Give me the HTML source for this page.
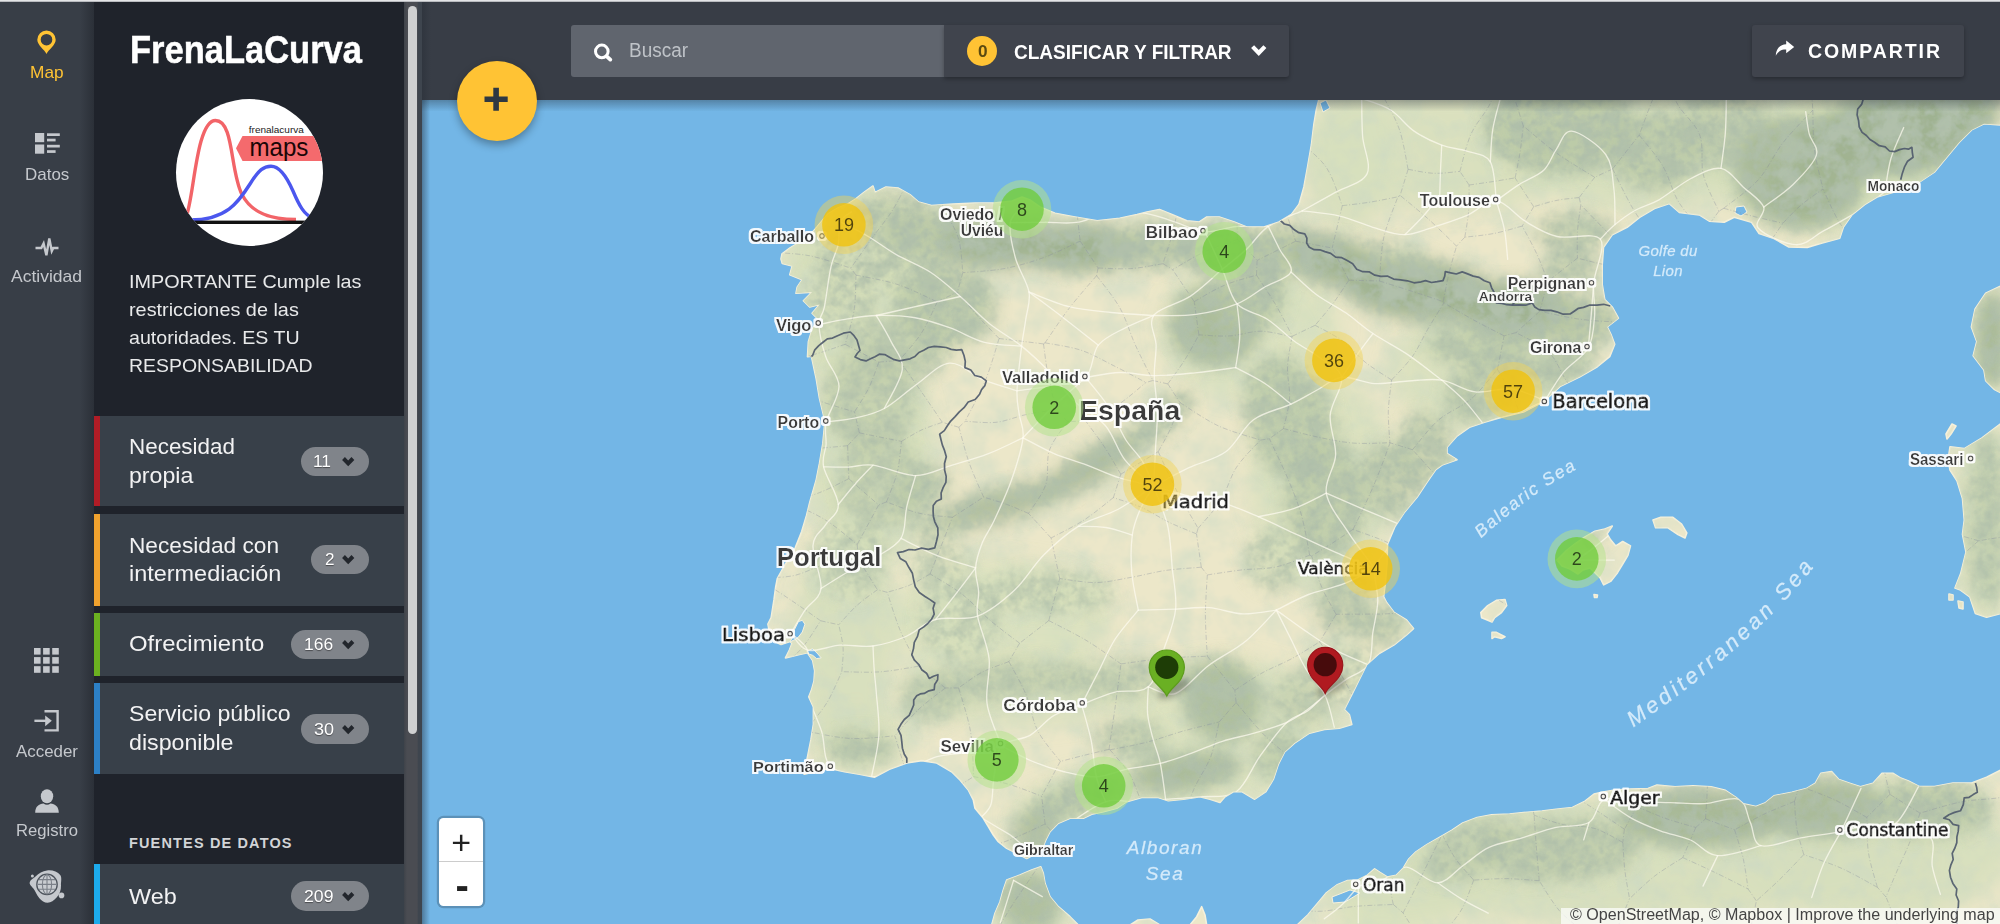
<!DOCTYPE html>
<html lang="es"><head><meta charset="utf-8"><title>FrenaLaCurva</title>
<style>

html,body{margin:0;padding:0;background:#1f232b;}
body{width:2000px;height:924px;overflow:hidden;font-family:'Liberation Sans', sans-serif;}
#app{position:relative;width:2000px;height:924px;overflow:hidden;background:#383d46;}
.t{position:absolute;white-space:nowrap;line-height:1;display:inline-block;transform-origin:0 50%;}
.abs{position:absolute;}
#rail{left:0;top:0;width:94px;height:924px;background:linear-gradient(90deg,#383e47 0,#383e47 80px,#2b3038 94px);}
#side{left:94px;top:0;width:310px;height:924px;background:#1f232b;}
.card{left:94px;width:310px;background:#384049;}
.card i{position:absolute;left:-0.4px;top:0;bottom:0;width:6.3px;}
.badge{height:29.6px;border-radius:15px;background:#80848a;}
#track{left:404px;top:0;width:17.5px;height:924px;background:linear-gradient(90deg,#3f434a 0,#4a4c52 3px,#4a4c52 13px,#3e454e 14.5px,#3e454e 100%);}
#thumb{left:408.3px;top:5.5px;width:9px;height:728.5px;border-radius:4.5px;background:#cfd0d1;}
#topbar{left:421px;top:0;width:1579px;height:99.8px;background:linear-gradient(90deg,#2f353e 0,#383d46 10px);}
#topline{left:0;top:0;width:2000px;height:2px;background:linear-gradient(180deg,#e4e5e7 0,#e4e5e7 1px,#8f9298 2px);z-index:9;}
#search{left:571px;top:25px;width:373px;height:52px;background:#60656e;border-radius:3px 0 0 3px;}
#filter{left:944px;top:25px;width:345.4px;height:52px;background:#40444d;border-radius:0 3px 3px 0;box-shadow:0 2px 4px rgba(0,0,0,.3);}
#share{left:1752.4px;top:25px;width:211.8px;height:52px;background:#40444d;border-radius:3px;box-shadow:0 2px 4px rgba(0,0,0,.3);}
#fab{left:456.6px;top:60.9px;width:80px;height:80px;border-radius:50%;background:#ffc334;box-shadow:0 4px 9px rgba(0,0,0,.32);}
#zoom{left:439.1px;top:818.1px;width:44.3px;height:87.9px;background:#fff;border-radius:4.5px;box-shadow:0 0 0 2.2px rgba(0,0,0,.2);}
#zoom b{position:absolute;left:0;right:0;top:43px;height:1.4px;background:#ccc;}
#attr{left:1561px;top:908.2px;width:439px;height:16px;background:rgba(255,255,255,.7);}
svg.ic{position:absolute;overflow:visible;}

</style></head><body>
<div id="app">
<svg id="map" width="1579" height="825" viewBox="421 99 1579 825" style="position:absolute;left:421px;top:99px" font-family="'Liberation Sans', sans-serif">
<defs>
<clipPath id="landclip"><path d="M1319.0,99.0 L1316.3,110.0 L1313.8,125.0 L1311.4,145.0 L1307.6,167.0 L1303.9,187.0 L1298.9,204.6 L1291.4,214.5 L1279.0,222.0 L1264.0,227.0 L1246.6,227.0 L1234.2,222.0 L1219.2,217.0 L1206.8,217.0 L1199.3,222.0 L1186.9,220.7 L1171.9,214.5 L1159.5,209.5 L1147.0,212.0 L1137.1,214.5 L1119.7,218.2 L1097.3,220.7 L1074.9,217.0 L1055.0,213.3 L1040.0,207.0 L1030.0,200.0 L1022.0,197.0 L1012.0,201.0 L994.0,203.0 L975.0,203.0 L953.0,204.0 L931.5,205.5 L918.5,202.0 L910.0,194.6 L898.0,188.0 L886.0,187.0 L875.0,192.5 L873.0,186.0 L864.0,192.5 L855.8,199.0 L848.0,204.0 L838.0,208.0 L828.0,214.0 L822.0,221.0 L817.0,227.0 L810.0,235.0 L800.0,242.0 L790.0,248.0 L782.0,254.0 L781.0,259.0 L782.3,263.5 L792.2,266.0 L789.8,274.7 L802.2,279.7 L797.2,287.1 L796.0,293.3 L812.1,292.1 L803.4,300.8 L809.7,307.0 L819.6,304.5 L812.1,313.2 L818.4,319.5 L812.1,329.4 L808.4,341.8 L807.5,356.8 L811.4,356.2 L816.3,379.0 L819.5,398.4 L825.0,421.2 L822.8,443.9 L819.5,463.4 L816.3,479.6 L809.8,502.3 L806.6,515.3 L801.7,531.6 L795.2,547.8 L785.5,564.0 L777.3,578.6 L775.7,586.8 L774.0,599.7 L771.2,617.7 L767.9,624.2 L769.5,632.0 L773.8,641.0 L781.0,644.5 L790.0,641.5 L792.0,643.5 L789.4,650.0 L785.5,657.9 L798.4,654.7 L807.5,652.7 L812.7,660.5 L814.7,670.9 L814.0,681.3 L811.4,690.4 L808.8,696.9 L813.4,707.0 L813.4,724.5 L811.0,739.4 L808.5,751.9 L806.0,764.3 L804.2,774.3 L814.7,771.8 L829.6,768.5 L844.6,771.8 L859.5,774.3 L874.4,777.2 L889.4,769.3 L906.8,763.0 L921.7,760.6 L936.7,763.0 L951.6,771.8 L960.0,780.0 L968.3,790.0 L973.3,800.0 L975.0,808.3 L983.3,818.3 L988.3,826.7 L993.3,835.0 L998.3,841.7 L1006.7,848.3 L1016.7,853.3 L1026.7,858.5 L1033.3,855.0 L1041.7,850.0 L1045.8,840.0 L1050.0,831.7 L1058.3,823.3 L1070.0,818.3 L1083.3,818.3 L1091.7,814.2 L1103.3,811.7 L1116.7,808.3 L1126.7,801.7 L1141.7,797.5 L1158.3,797.5 L1168.3,800.8 L1183.3,799.2 L1200.0,796.7 L1210.0,799.2 L1220.0,802.5 L1225.0,796.7 L1233.3,791.7 L1242.2,791.7 L1254.7,799.2 L1265.9,791.7 L1273.4,779.2 L1278.3,764.3 L1284.6,751.9 L1294.5,743.1 L1309.4,733.2 L1324.4,729.4 L1339.3,728.2 L1351.8,724.5 L1349.3,714.5 L1344.3,709.5 L1351.8,694.6 L1359.2,679.7 L1366.7,664.7 L1379.2,653.5 L1394.1,644.8 L1406.5,634.9 L1413.5,628.6 L1406.5,619.9 L1394.1,612.4 L1386.6,602.5 L1383.6,596.6 L1385.5,582.0 L1387.0,563.0 L1387.5,544.3 L1394.8,526.9 L1404.7,511.9 L1417.2,497.0 L1427.1,482.1 L1435.8,469.6 L1442.0,465.0 L1457.0,459.7 L1447.0,453.4 L1447.0,447.2 L1457.0,436.0 L1469.4,427.3 L1484.4,422.3 L1501.8,417.3 L1524.2,411.6 L1544.1,401.2 L1559.9,386.6 L1579.8,376.7 L1597.3,366.7 L1609.7,356.7 L1614.7,344.3 L1610.9,334.3 L1607.2,326.9 L1618.4,318.2 L1612.2,307.0 L1604.7,299.5 L1602.2,284.6 L1602.2,264.6 L1603.5,247.2 L1612.2,234.8 L1627.1,227.3 L1639.6,217.3 L1654.5,208.6 L1669.4,203.6 L1679.4,212.4 L1699.3,214.9 L1709.3,221.1 L1724.2,222.3 L1734.2,217.3 L1751.6,222.3 L1759.1,233.5 L1774.0,238.5 L1788.9,247.0 L1807.3,247.5 L1822.2,243.1 L1839.7,238.2 L1843.4,227.0 L1852.1,214.5 L1864.6,204.6 L1877.0,197.1 L1894.4,192.1 L1919.3,182.2 L1934.3,172.2 L1946.7,157.3 L1959.2,142.3 L1971.6,129.9 L1984.0,123.7 L2001.0,124.9 L2001.0,99.0Z M991.7,925.0 L995.0,913.3 L1000.0,901.7 L1003.3,890.0 L1006.7,880.0 L1020.0,875.0 L1031.7,870.0 L1040.8,866.7 L1043.3,873.3 L1045.0,883.3 L1050.0,896.7 L1058.3,906.7 L1070.0,916.7 L1078.3,925.0Z M1130.0,925.0 L1138.0,920.0 L1150.0,919.0 L1160.0,925.0Z M1190.0,925.0 L1196.7,916.7 L1201.7,906.7 L1205.0,915.0 L1206.7,925.0Z M1297.2,925.0 L1308.0,914.8 L1317.0,904.0 L1326.0,893.2 L1336.8,885.1 L1347.6,880.6 L1358.0,880.0 L1367.4,875.2 L1374.6,868.9 L1380.0,872.5 L1387.2,877.0 L1396.2,875.2 L1403.4,868.0 L1408.8,859.0 L1416.0,851.8 L1426.8,844.6 L1439.4,837.4 L1452.0,830.2 L1462.8,823.0 L1477.2,817.6 L1491.6,814.9 L1509.6,814.0 L1527.6,812.2 L1542.0,811.0 L1556.2,809.3 L1572.4,807.5 L1585.0,801.2 L1594.0,794.0 L1603.0,792.0 L1615.0,790.0 L1630.0,789.0 L1648.0,788.6 L1657.0,785.0 L1675.0,786.8 L1693.0,785.9 L1711.0,786.8 L1725.4,790.4 L1736.2,797.6 L1743.4,803.9 L1756.0,806.6 L1765.0,803.0 L1774.0,795.8 L1792.0,792.2 L1806.4,788.6 L1815.4,783.2 L1820.8,773.3 L1831.6,771.5 L1838.8,779.6 L1849.6,783.2 L1860.4,786.8 L1873.0,783.2 L1882.0,773.3 L1892.8,773.3 L1900.0,777.8 L1908.4,781.0 L1919.6,786.6 L1934.5,786.6 L1953.0,783.0 L1971.7,783.0 L1986.6,777.3 L2001.0,770.0 L2001.0,925.0Z M2001.0,423.6 L1982.0,437.9 L1964.3,448.6 L1950.0,446.8 L1948.2,459.3 L1950.0,470.0 L1957.0,480.7 L1962.5,498.6 L1964.3,520.0 L1962.5,534.3 L1966.0,552.1 L1960.7,573.6 L1955.0,588.0 L1960.5,590.0 L1969.8,596.8 L1975.4,613.5 L1986.6,617.2 L2001.0,613.5Z M1952.0,424.0 L1956.0,426.0 L1951.0,434.0 L1947.0,439.0 L1946.0,434.0Z M1949.0,594.0 L1953.0,595.0 L1953.0,600.0 L1949.0,600.0Z M1958.0,601.0 L1963.0,602.0 L1963.0,609.0 L1959.0,608.0Z M2001.0,286.0 L1985.7,293.2 L1975.0,309.3 L1971.4,327.0 L1976.8,341.4 L1973.2,355.7 L1984.0,370.0 L1985.7,380.7 L1994.6,389.6 L2001.0,393.0Z M1557.0,560.0 L1566.0,551.0 L1575.0,544.0 L1584.6,537.2 L1595.0,531.2 L1603.7,529.4 L1612.3,526.0 L1607.1,533.8 L1610.6,539.8 L1615.8,545.9 L1622.7,541.5 L1630.5,545.9 L1627.9,555.4 L1622.7,564.0 L1617.5,572.7 L1610.6,581.4 L1603.7,584.8 L1600.2,577.9 L1596.7,574.4 L1590.0,568.0 L1583.0,570.0 L1578.0,574.0 L1570.0,569.0 L1562.0,566.0Z M1653.0,519.9 L1660.8,517.3 L1672.9,517.3 L1681.6,524.2 L1686.8,532.9 L1685.0,538.0 L1678.0,534.6 L1667.7,527.7 L1655.6,527.7Z M1480.8,612.5 L1487.7,605.6 L1496.4,600.4 L1505.0,599.5 L1506.7,605.6 L1501.5,612.5 L1494.6,617.7 L1492.0,622.0 L1486.0,619.4 L1481.6,617.7Z M1492.0,632.4 L1496.4,632.4 L1505.0,636.7 L1501.5,638.5 L1494.6,636.7 L1492.0,638.5Z M1594.0,594.5 L1597.5,595.0 L1597.0,597.5 L1594.5,597.5Z"/></clipPath>
<filter id="bl" filterUnits="userSpaceOnUse" x="421" y="99" width="1579" height="825"><feGaussianBlur in="SourceGraphic" stdDeviation="8" result="b"/><feTurbulence type="fractalNoise" baseFrequency="0.05" numOctaves="4" seed="11" result="n"/><feColorMatrix in="n" type="matrix" values="0 0 0 0 0.44  0 0 0 0 0.53  0 0 0 0 0.41  3.4 0 0 0 -1.25" result="nc"/><feComposite in="nc" in2="b" operator="in" result="nm"/><feTurbulence type="fractalNoise" baseFrequency="0.13" numOctaves="2" seed="23" result="n2"/><feColorMatrix in="n2" type="matrix" values="0 0 0 0 0.42  0 0 0 0 0.51  0 0 0 0 0.40  0 2.6 0 0 -1.12" result="nc2"/><feComposite in="nc2" in2="b" operator="in" result="nm2"/><feMerge><feMergeNode in="b"/><feMergeNode in="nm"/><feMergeNode in="nm2"/></feMerge></filter>
<filter id="wb" filterUnits="userSpaceOnUse" x="421" y="99" width="1579" height="825"><feGaussianBlur in="SourceGraphic" stdDeviation="10" result="b"/><feTurbulence type="fractalNoise" baseFrequency="0.04" numOctaves="3" seed="31" result="n"/><feColorMatrix in="n" type="matrix" values="0 0 0 0 0.62  0 0 0 0 0.70  0 0 0 0 0.54  2.2 0 0 0 -0.9" result="nc"/><feComposite in="nc" in2="b" operator="in" result="nm"/><feMerge><feMergeNode in="b"/><feMergeNode in="nm"/></feMerge></filter>
<filter id="tx" filterUnits="userSpaceOnUse" x="421" y="99" width="1579" height="825"><feTurbulence type="fractalNoise" baseFrequency="0.03" numOctaves="4" seed="4" result="n"/><feColorMatrix in="n" type="matrix" values="0 0 0 0 0.66  0 0 0 0 0.73  0 0 0 0 0.57  0 1.9 0 0 -0.74" result="nc"/><feComposite in="nc" in2="SourceGraphic" operator="in"/></filter>
<filter id="sh" x="-50%" y="-50%" width="200%" height="200%"><feGaussianBlur stdDeviation="3"/></filter>
<filter id="halo" x="-10%" y="-30%" width="120%" height="160%"><feMorphology in="SourceAlpha" operator="dilate" radius="1.6" result="d"/><feGaussianBlur in="d" stdDeviation="0.7" result="b"/><feFlood flood-color="#fff" flood-opacity="0.92"/><feComposite in2="b" operator="in" result="h"/><feMerge><feMergeNode in="h"/><feMergeNode in="SourceGraphic"/></feMerge></filter>
<linearGradient id="edge" x1="0" x2="1"><stop offset="0" stop-color="#2a3a4a" stop-opacity="0.55"/><stop offset="1" stop-color="#2a3a4a" stop-opacity="0"/></linearGradient>
<linearGradient id="topsh" x1="0" x2="0" y1="0" y2="1"><stop offset="0" stop-color="#1c2630" stop-opacity="0.36"/><stop offset="1" stop-color="#1c2630" stop-opacity="0"/></linearGradient>
</defs>
<rect x="421" y="99" width="1579" height="825" fill="#73b6e6"/>
<path d="M1319.0,99.0 L1316.3,110.0 L1313.8,125.0 L1311.4,145.0 L1307.6,167.0 L1303.9,187.0 L1298.9,204.6 L1291.4,214.5 L1279.0,222.0 L1264.0,227.0 L1246.6,227.0 L1234.2,222.0 L1219.2,217.0 L1206.8,217.0 L1199.3,222.0 L1186.9,220.7 L1171.9,214.5 L1159.5,209.5 L1147.0,212.0 L1137.1,214.5 L1119.7,218.2 L1097.3,220.7 L1074.9,217.0 L1055.0,213.3 L1040.0,207.0 L1030.0,200.0 L1022.0,197.0 L1012.0,201.0 L994.0,203.0 L975.0,203.0 L953.0,204.0 L931.5,205.5 L918.5,202.0 L910.0,194.6 L898.0,188.0 L886.0,187.0 L875.0,192.5 L873.0,186.0 L864.0,192.5 L855.8,199.0 L848.0,204.0 L838.0,208.0 L828.0,214.0 L822.0,221.0 L817.0,227.0 L810.0,235.0 L800.0,242.0 L790.0,248.0 L782.0,254.0 L781.0,259.0 L782.3,263.5 L792.2,266.0 L789.8,274.7 L802.2,279.7 L797.2,287.1 L796.0,293.3 L812.1,292.1 L803.4,300.8 L809.7,307.0 L819.6,304.5 L812.1,313.2 L818.4,319.5 L812.1,329.4 L808.4,341.8 L807.5,356.8 L811.4,356.2 L816.3,379.0 L819.5,398.4 L825.0,421.2 L822.8,443.9 L819.5,463.4 L816.3,479.6 L809.8,502.3 L806.6,515.3 L801.7,531.6 L795.2,547.8 L785.5,564.0 L777.3,578.6 L775.7,586.8 L774.0,599.7 L771.2,617.7 L767.9,624.2 L769.5,632.0 L773.8,641.0 L781.0,644.5 L790.0,641.5 L792.0,643.5 L789.4,650.0 L785.5,657.9 L798.4,654.7 L807.5,652.7 L812.7,660.5 L814.7,670.9 L814.0,681.3 L811.4,690.4 L808.8,696.9 L813.4,707.0 L813.4,724.5 L811.0,739.4 L808.5,751.9 L806.0,764.3 L804.2,774.3 L814.7,771.8 L829.6,768.5 L844.6,771.8 L859.5,774.3 L874.4,777.2 L889.4,769.3 L906.8,763.0 L921.7,760.6 L936.7,763.0 L951.6,771.8 L960.0,780.0 L968.3,790.0 L973.3,800.0 L975.0,808.3 L983.3,818.3 L988.3,826.7 L993.3,835.0 L998.3,841.7 L1006.7,848.3 L1016.7,853.3 L1026.7,858.5 L1033.3,855.0 L1041.7,850.0 L1045.8,840.0 L1050.0,831.7 L1058.3,823.3 L1070.0,818.3 L1083.3,818.3 L1091.7,814.2 L1103.3,811.7 L1116.7,808.3 L1126.7,801.7 L1141.7,797.5 L1158.3,797.5 L1168.3,800.8 L1183.3,799.2 L1200.0,796.7 L1210.0,799.2 L1220.0,802.5 L1225.0,796.7 L1233.3,791.7 L1242.2,791.7 L1254.7,799.2 L1265.9,791.7 L1273.4,779.2 L1278.3,764.3 L1284.6,751.9 L1294.5,743.1 L1309.4,733.2 L1324.4,729.4 L1339.3,728.2 L1351.8,724.5 L1349.3,714.5 L1344.3,709.5 L1351.8,694.6 L1359.2,679.7 L1366.7,664.7 L1379.2,653.5 L1394.1,644.8 L1406.5,634.9 L1413.5,628.6 L1406.5,619.9 L1394.1,612.4 L1386.6,602.5 L1383.6,596.6 L1385.5,582.0 L1387.0,563.0 L1387.5,544.3 L1394.8,526.9 L1404.7,511.9 L1417.2,497.0 L1427.1,482.1 L1435.8,469.6 L1442.0,465.0 L1457.0,459.7 L1447.0,453.4 L1447.0,447.2 L1457.0,436.0 L1469.4,427.3 L1484.4,422.3 L1501.8,417.3 L1524.2,411.6 L1544.1,401.2 L1559.9,386.6 L1579.8,376.7 L1597.3,366.7 L1609.7,356.7 L1614.7,344.3 L1610.9,334.3 L1607.2,326.9 L1618.4,318.2 L1612.2,307.0 L1604.7,299.5 L1602.2,284.6 L1602.2,264.6 L1603.5,247.2 L1612.2,234.8 L1627.1,227.3 L1639.6,217.3 L1654.5,208.6 L1669.4,203.6 L1679.4,212.4 L1699.3,214.9 L1709.3,221.1 L1724.2,222.3 L1734.2,217.3 L1751.6,222.3 L1759.1,233.5 L1774.0,238.5 L1788.9,247.0 L1807.3,247.5 L1822.2,243.1 L1839.7,238.2 L1843.4,227.0 L1852.1,214.5 L1864.6,204.6 L1877.0,197.1 L1894.4,192.1 L1919.3,182.2 L1934.3,172.2 L1946.7,157.3 L1959.2,142.3 L1971.6,129.9 L1984.0,123.7 L2001.0,124.9 L2001.0,99.0Z M991.7,925.0 L995.0,913.3 L1000.0,901.7 L1003.3,890.0 L1006.7,880.0 L1020.0,875.0 L1031.7,870.0 L1040.8,866.7 L1043.3,873.3 L1045.0,883.3 L1050.0,896.7 L1058.3,906.7 L1070.0,916.7 L1078.3,925.0Z M1130.0,925.0 L1138.0,920.0 L1150.0,919.0 L1160.0,925.0Z M1190.0,925.0 L1196.7,916.7 L1201.7,906.7 L1205.0,915.0 L1206.7,925.0Z M1297.2,925.0 L1308.0,914.8 L1317.0,904.0 L1326.0,893.2 L1336.8,885.1 L1347.6,880.6 L1358.0,880.0 L1367.4,875.2 L1374.6,868.9 L1380.0,872.5 L1387.2,877.0 L1396.2,875.2 L1403.4,868.0 L1408.8,859.0 L1416.0,851.8 L1426.8,844.6 L1439.4,837.4 L1452.0,830.2 L1462.8,823.0 L1477.2,817.6 L1491.6,814.9 L1509.6,814.0 L1527.6,812.2 L1542.0,811.0 L1556.2,809.3 L1572.4,807.5 L1585.0,801.2 L1594.0,794.0 L1603.0,792.0 L1615.0,790.0 L1630.0,789.0 L1648.0,788.6 L1657.0,785.0 L1675.0,786.8 L1693.0,785.9 L1711.0,786.8 L1725.4,790.4 L1736.2,797.6 L1743.4,803.9 L1756.0,806.6 L1765.0,803.0 L1774.0,795.8 L1792.0,792.2 L1806.4,788.6 L1815.4,783.2 L1820.8,773.3 L1831.6,771.5 L1838.8,779.6 L1849.6,783.2 L1860.4,786.8 L1873.0,783.2 L1882.0,773.3 L1892.8,773.3 L1900.0,777.8 L1908.4,781.0 L1919.6,786.6 L1934.5,786.6 L1953.0,783.0 L1971.7,783.0 L1986.6,777.3 L2001.0,770.0 L2001.0,925.0Z M2001.0,423.6 L1982.0,437.9 L1964.3,448.6 L1950.0,446.8 L1948.2,459.3 L1950.0,470.0 L1957.0,480.7 L1962.5,498.6 L1964.3,520.0 L1962.5,534.3 L1966.0,552.1 L1960.7,573.6 L1955.0,588.0 L1960.5,590.0 L1969.8,596.8 L1975.4,613.5 L1986.6,617.2 L2001.0,613.5Z M1952.0,424.0 L1956.0,426.0 L1951.0,434.0 L1947.0,439.0 L1946.0,434.0Z M1949.0,594.0 L1953.0,595.0 L1953.0,600.0 L1949.0,600.0Z M1958.0,601.0 L1963.0,602.0 L1963.0,609.0 L1959.0,608.0Z M2001.0,286.0 L1985.7,293.2 L1975.0,309.3 L1971.4,327.0 L1976.8,341.4 L1973.2,355.7 L1984.0,370.0 L1985.7,380.7 L1994.6,389.6 L2001.0,393.0Z M1557.0,560.0 L1566.0,551.0 L1575.0,544.0 L1584.6,537.2 L1595.0,531.2 L1603.7,529.4 L1612.3,526.0 L1607.1,533.8 L1610.6,539.8 L1615.8,545.9 L1622.7,541.5 L1630.5,545.9 L1627.9,555.4 L1622.7,564.0 L1617.5,572.7 L1610.6,581.4 L1603.7,584.8 L1600.2,577.9 L1596.7,574.4 L1590.0,568.0 L1583.0,570.0 L1578.0,574.0 L1570.0,569.0 L1562.0,566.0Z M1653.0,519.9 L1660.8,517.3 L1672.9,517.3 L1681.6,524.2 L1686.8,532.9 L1685.0,538.0 L1678.0,534.6 L1667.7,527.7 L1655.6,527.7Z M1480.8,612.5 L1487.7,605.6 L1496.4,600.4 L1505.0,599.5 L1506.7,605.6 L1501.5,612.5 L1494.6,617.7 L1492.0,622.0 L1486.0,619.4 L1481.6,617.7Z M1492.0,632.4 L1496.4,632.4 L1505.0,636.7 L1501.5,638.5 L1494.6,636.7 L1492.0,638.5Z M1594.0,594.5 L1597.5,595.0 L1597.0,597.5 L1594.5,597.5Z" fill="#ece7c9" stroke="#f6f1dc" stroke-width="1.6" stroke-linejoin="round"/>
<g clip-path="url(#landclip)">
<rect x="421" y="99" width="1579" height="825" fill="#000" filter="url(#tx)"/>
<g filter="url(#wb)"><ellipse cx="865" cy="290" rx="85" ry="100" transform="rotate(0 865 290)" fill="#d6dfbc" opacity="0.95"/><ellipse cx="870" cy="450" rx="60" ry="110" transform="rotate(0 870 450)" fill="#d6dfbc" opacity="0.95"/><ellipse cx="845" cy="640" rx="50" ry="110" transform="rotate(0 845 640)" fill="#d6dfbc" opacity="0.9"/><ellipse cx="860" cy="740" rx="50" ry="30" transform="rotate(0 860 740)" fill="#d6dfbc" opacity="0.8"/><ellipse cx="1000" cy="620" rx="110" ry="60" transform="rotate(0 1000 620)" fill="#d6dfbc" opacity="0.7"/><ellipse cx="1020" cy="690" rx="120" ry="35" transform="rotate(0 1020 690)" fill="#d6dfbc" opacity="0.8"/><ellipse cx="1450" cy="150" rx="140" ry="60" transform="rotate(0 1450 150)" fill="#d6dfbc" opacity="0.8"/><ellipse cx="1640" cy="150" rx="120" ry="60" transform="rotate(0 1640 150)" fill="#d6dfbc" opacity="0.9"/><ellipse cx="1850" cy="160" rx="150" ry="70" transform="rotate(0 1850 160)" fill="#d6dfbc" opacity="0.95"/><ellipse cx="1350" cy="160" rx="45" ry="70" transform="rotate(0 1350 160)" fill="#d6dfbc" opacity="0.9"/><ellipse cx="1600" cy="860" rx="330" ry="60" transform="rotate(0 1600 860)" fill="#d6dfbc" opacity="0.9"/><ellipse cx="1880" cy="850" rx="130" ry="70" transform="rotate(0 1880 850)" fill="#d6dfbc" opacity="0.9"/><ellipse cx="1420" cy="890" rx="90" ry="40" transform="rotate(-20 1420 890)" fill="#d6dfbc" opacity="0.85"/><ellipse cx="1030" cy="900" rx="40" ry="35" transform="rotate(0 1030 900)" fill="#d6dfbc" opacity="0.9"/><ellipse cx="1985" cy="520" rx="30" ry="100" transform="rotate(0 1985 520)" fill="#d6dfbc" opacity="0.9"/><ellipse cx="1990" cy="340" rx="20" ry="55" transform="rotate(0 1990 340)" fill="#d6dfbc" opacity="0.9"/><ellipse cx="1250" cy="330" rx="90" ry="70" transform="rotate(0 1250 330)" fill="#d6dfbc" opacity="0.7"/><ellipse cx="1320" cy="480" rx="70" ry="110" transform="rotate(0 1320 480)" fill="#d6dfbc" opacity="0.75"/><ellipse cx="1480" cy="370" rx="90" ry="60" transform="rotate(0 1480 370)" fill="#d6dfbc" opacity="0.75"/><ellipse cx="1230" cy="730" rx="110" ry="70" transform="rotate(0 1230 730)" fill="#d6dfbc" opacity="0.7"/><ellipse cx="1110" cy="800" rx="100" ry="30" transform="rotate(-8 1110 800)" fill="#d6dfbc" opacity="0.7"/></g>
<g filter="url(#bl)"><ellipse cx="870" cy="250" rx="55" ry="45" transform="rotate(0 870 250)" fill="#d0dab6" opacity="0.6"/><ellipse cx="840" cy="300" rx="35" ry="45" transform="rotate(0 840 300)" fill="#d0dab6" opacity="0.5"/><ellipse cx="900" cy="215" rx="40" ry="20" transform="rotate(0 900 215)" fill="#b9c8a5" opacity="0.6"/><ellipse cx="930" cy="237" rx="50" ry="24" transform="rotate(0 930 237)" fill="#b9c8a5" opacity="0.9"/><ellipse cx="1000" cy="243" rx="60" ry="24" transform="rotate(0 1000 243)" fill="#a0b391" opacity="0.95"/><ellipse cx="1080" cy="248" rx="60" ry="23" transform="rotate(0 1080 248)" fill="#a0b391" opacity="0.95"/><ellipse cx="1150" cy="246" rx="50" ry="21" transform="rotate(0 1150 246)" fill="#b9c8a5" opacity="0.9"/><ellipse cx="1225" cy="250" rx="50" ry="24" transform="rotate(0 1225 250)" fill="#b9c8a5" opacity="0.85"/><ellipse cx="1285" cy="245" rx="28" ry="22" transform="rotate(0 1285 245)" fill="#b9c8a5" opacity="0.7"/><ellipse cx="945" cy="305" rx="50" ry="42" transform="rotate(0 945 305)" fill="#b9c8a5" opacity="0.8"/><ellipse cx="900" cy="350" rx="50" ry="30" transform="rotate(0 900 350)" fill="#b9c8a5" opacity="0.55"/><ellipse cx="870" cy="400" rx="45" ry="50" transform="rotate(0 870 400)" fill="#b9c8a5" opacity="0.55"/><ellipse cx="880" cy="480" rx="42" ry="48" transform="rotate(0 880 480)" fill="#b9c8a5" opacity="0.5"/><ellipse cx="850" cy="560" rx="38" ry="38" transform="rotate(0 850 560)" fill="#d0dab6" opacity="0.55"/><ellipse cx="920" cy="490" rx="30" ry="20" transform="rotate(-30 920 490)" fill="#b9c8a5" opacity="0.7"/><ellipse cx="1000" cy="505" rx="62" ry="16" transform="rotate(-15 1000 505)" fill="#a0b391" opacity="0.75"/><ellipse cx="1092" cy="466" rx="60" ry="16" transform="rotate(-30 1092 466)" fill="#a0b391" opacity="0.8"/><ellipse cx="1160" cy="420" rx="40" ry="15" transform="rotate(-40 1160 420)" fill="#b9c8a5" opacity="0.7"/><ellipse cx="940" cy="525" rx="30" ry="15" transform="rotate(-10 940 525)" fill="#b9c8a5" opacity="0.6"/><ellipse cx="1215" cy="325" rx="45" ry="40" transform="rotate(0 1215 325)" fill="#a0b391" opacity="0.8"/><ellipse cx="1250" cy="295" rx="35" ry="35" transform="rotate(0 1250 295)" fill="#b9c8a5" opacity="0.8"/><ellipse cx="1290" cy="420" rx="42" ry="65" transform="rotate(-20 1290 420)" fill="#b9c8a5" opacity="0.75"/><ellipse cx="1325" cy="500" rx="40" ry="60" transform="rotate(0 1325 500)" fill="#b9c8a5" opacity="0.75"/><ellipse cx="1275" cy="560" rx="30" ry="30" transform="rotate(0 1275 560)" fill="#d0dab6" opacity="0.6"/><ellipse cx="1390" cy="480" rx="30" ry="38" transform="rotate(0 1390 480)" fill="#b9c8a5" opacity="0.7"/><ellipse cx="1345" cy="600" rx="28" ry="35" transform="rotate(0 1345 600)" fill="#b9c8a5" opacity="0.7"/><ellipse cx="1335" cy="262" rx="50" ry="24" transform="rotate(15 1335 262)" fill="#a0b391" opacity="0.9"/><ellipse cx="1420" cy="290" rx="75" ry="30" transform="rotate(5 1420 290)" fill="#a0b391" opacity="0.95"/><ellipse cx="1520" cy="310" rx="62" ry="28" transform="rotate(5 1520 310)" fill="#a0b391" opacity="0.95"/><ellipse cx="1580" cy="320" rx="40" ry="24" transform="rotate(0 1580 320)" fill="#b9c8a5" opacity="0.85"/><ellipse cx="1260" cy="258" rx="38" ry="28" transform="rotate(0 1260 258)" fill="#b9c8a5" opacity="0.8"/><ellipse cx="1390" cy="262" rx="50" ry="18" transform="rotate(10 1390 262)" fill="#b9c8a5" opacity="0.6"/><ellipse cx="1480" cy="345" rx="55" ry="20" transform="rotate(0 1480 345)" fill="#b9c8a5" opacity="0.65"/><ellipse cx="1400" cy="286" rx="60" ry="16" transform="rotate(8 1400 286)" fill="#a0b391" opacity="0.9"/><ellipse cx="1500" cy="306" rx="60" ry="16" transform="rotate(4 1500 306)" fill="#a0b391" opacity="0.9"/><ellipse cx="1340" cy="258" rx="35" ry="12" transform="rotate(15 1340 258)" fill="#a0b391" opacity="0.8"/><ellipse cx="1880" cy="140" rx="80" ry="35" transform="rotate(0 1880 140)" fill="#a0b391" opacity="0.9"/><ellipse cx="1810" cy="190" rx="45" ry="35" transform="rotate(0 1810 190)" fill="#a0b391" opacity="0.7"/><ellipse cx="1950" cy="118" rx="45" ry="18" transform="rotate(0 1950 118)" fill="#a0b391" opacity="0.9"/><ellipse cx="1040" cy="244" rx="90" ry="12" transform="rotate(2 1040 244)" fill="#a0b391" opacity="0.8"/><ellipse cx="1490" cy="385" rx="48" ry="30" transform="rotate(-30 1490 385)" fill="#b9c8a5" opacity="0.7"/><ellipse cx="1425" cy="450" rx="28" ry="38" transform="rotate(0 1425 450)" fill="#b9c8a5" opacity="0.65"/><ellipse cx="1562" cy="362" rx="38" ry="22" transform="rotate(-30 1562 362)" fill="#b9c8a5" opacity="0.65"/><ellipse cx="1045" cy="592" rx="70" ry="20" transform="rotate(0 1045 592)" fill="#d0dab6" opacity="0.6"/><ellipse cx="960" cy="620" rx="40" ry="40" transform="rotate(0 960 620)" fill="#d0dab6" opacity="0.55"/><ellipse cx="940" cy="565" rx="30" ry="25" transform="rotate(0 940 565)" fill="#d0dab6" opacity="0.5"/><ellipse cx="1000" cy="682" rx="85" ry="18" transform="rotate(-5 1000 682)" fill="#b9c8a5" opacity="0.55"/><ellipse cx="1130" cy="678" rx="70" ry="18" transform="rotate(-5 1130 678)" fill="#b9c8a5" opacity="0.55"/><ellipse cx="930" cy="700" rx="30" ry="25" transform="rotate(0 930 700)" fill="#b9c8a5" opacity="0.45"/><ellipse cx="1222" cy="700" rx="38" ry="42" transform="rotate(-25 1222 700)" fill="#a0b391" opacity="0.72"/><ellipse cx="1185" cy="772" rx="55" ry="18" transform="rotate(-8 1185 772)" fill="#a0b391" opacity="0.8"/><ellipse cx="1075" cy="800" rx="45" ry="18" transform="rotate(-15 1075 800)" fill="#b9c8a5" opacity="0.8"/><ellipse cx="1035" cy="832" rx="22" ry="22" transform="rotate(0 1035 832)" fill="#a0b391" opacity="0.7"/><ellipse cx="1280" cy="755" rx="25" ry="28" transform="rotate(0 1280 755)" fill="#b9c8a5" opacity="0.65"/><ellipse cx="1130" cy="740" rx="35" ry="20" transform="rotate(0 1130 740)" fill="#b9c8a5" opacity="0.55"/><ellipse cx="1340" cy="672" rx="38" ry="30" transform="rotate(0 1340 672)" fill="#d0dab6" opacity="0.6"/><ellipse cx="1382" cy="625" rx="25" ry="20" transform="rotate(0 1382 625)" fill="#b9c8a5" opacity="0.65"/><ellipse cx="1300" cy="700" rx="30" ry="25" transform="rotate(0 1300 700)" fill="#b9c8a5" opacity="0.5"/><ellipse cx="860" cy="748" rx="32" ry="16" transform="rotate(0 860 748)" fill="#b9c8a5" opacity="0.65"/><ellipse cx="1560" cy="128" rx="75" ry="45" transform="rotate(0 1560 128)" fill="#b9c8a5" opacity="0.85"/><ellipse cx="1655" cy="150" rx="48" ry="38" transform="rotate(0 1655 150)" fill="#b9c8a5" opacity="0.8"/><ellipse cx="1725" cy="128" rx="48" ry="38" transform="rotate(0 1725 128)" fill="#b9c8a5" opacity="0.7"/><ellipse cx="1800" cy="172" rx="65" ry="55" transform="rotate(0 1800 172)" fill="#a0b391" opacity="0.8"/><ellipse cx="1900" cy="132" rx="70" ry="40" transform="rotate(0 1900 132)" fill="#a0b391" opacity="0.9"/><ellipse cx="1960" cy="110" rx="40" ry="20" transform="rotate(0 1960 110)" fill="#a0b391" opacity="0.9"/><ellipse cx="1575" cy="232" rx="38" ry="18" transform="rotate(0 1575 232)" fill="#b9c8a5" opacity="0.7"/><ellipse cx="1570" cy="268" rx="28" ry="18" transform="rotate(0 1570 268)" fill="#b9c8a5" opacity="0.7"/><ellipse cx="1030" cy="902" rx="30" ry="30" transform="rotate(0 1030 902)" fill="#a0b391" opacity="0.7"/><ellipse cx="1560" cy="850" rx="80" ry="30" transform="rotate(-5 1560 850)" fill="#b9c8a5" opacity="0.7"/><ellipse cx="1700" cy="818" rx="80" ry="28" transform="rotate(0 1700 818)" fill="#a0b391" opacity="0.85"/><ellipse cx="1820" cy="808" rx="70" ry="28" transform="rotate(0 1820 808)" fill="#a0b391" opacity="0.8"/><ellipse cx="1930" cy="808" rx="60" ry="28" transform="rotate(0 1930 808)" fill="#b9c8a5" opacity="0.8"/><ellipse cx="1470" cy="850" rx="50" ry="25" transform="rotate(-25 1470 850)" fill="#b9c8a5" opacity="0.6"/><ellipse cx="1988" cy="520" rx="20" ry="85" transform="rotate(0 1988 520)" fill="#b9c8a5" opacity="0.6"/><ellipse cx="1992" cy="340" rx="15" ry="48" transform="rotate(0 1992 340)" fill="#a0b391" opacity="0.85"/><ellipse cx="1590" cy="540" rx="22" ry="6" transform="rotate(-35 1590 540)" fill="#b9c8a5" opacity="0.6"/></g>
<g fill="#73b6e6" stroke="#f6f1dc" stroke-width="1"><path d="M1736.0,207.0 L1744.0,206.0 L1747.0,212.0 L1741.0,216.0 L1735.0,213.0Z"/><path d="M792.6,637.1 L794.5,629.4 L798.4,621.6 L802.3,620.3 L804.9,624.2 L802.3,632.0 L798.4,637.1 L794.5,639.7 L790.0,642.0Z"/><path d="M806.9,650.8 L812.7,648.8 L817.9,654.0 L821.2,657.9 L816.6,658.6 L812.7,655.3 L808.8,654.0Z"/><path d="M1332.0,897.0 L1350.0,890.0 L1360.0,893.0 L1345.0,902.0 L1333.0,903.0Z"/><path d="M1320.0,103.0 L1326.0,100.0 L1330.0,108.0 L1323.0,112.0Z"/></g>
<g fill="none" stroke="#838a9c" stroke-width="0.9" stroke-opacity="0.38" stroke-dasharray="5 2 1 2"><path d="M797.0,-279.7 C792.6,-273.8 779.4,-255.8 770.2,-244.2 C761.0,-232.7 751.7,-221.1 741.7,-210.1 C731.7,-199.1 719.2,-190.1 710.3,-178.2 C701.3,-166.4 696.4,-151.5 688.0,-139.3 C679.7,-127.0 669.5,-116.1 660.2,-104.6 C650.8,-93.1 641.1,-81.9 632.0,-70.2 C622.9,-58.6 610.0,-40.4 605.6,-34.5"/><path d="M356.1,165.2 C360.8,160.4 374.1,145.0 384.5,136.8 C394.9,128.5 407.5,122.9 418.5,115.4 C429.6,107.9 440.0,99.5 450.8,91.7 C461.6,83.9 473.8,77.8 483.4,68.6 C493.0,59.3 498.8,45.2 508.5,36.0 C518.1,26.8 531.1,21.6 541.5,13.3 C551.9,5.0 560.1,-6.0 570.8,-14.0 C581.5,-21.9 599.8,-31.0 605.6,-34.5"/><path d="M394.1,829.4 C396.2,822.5 403.5,802.1 406.8,788.1 C410.1,774.1 412.6,760.0 413.6,745.6 C414.7,731.2 409.7,715.6 413.1,701.7 C416.6,687.8 429.5,675.7 434.5,662.1 C439.4,648.5 440.6,634.1 442.7,619.9 C444.7,605.7 444.8,591.1 446.8,576.9 C448.8,562.7 453.0,548.9 454.7,534.6 C456.4,520.4 454.3,505.3 456.9,491.2 C459.4,477.1 467.8,456.9 470.0,450.0"/><path d="M356.1,165.2 C359.8,171.5 373.3,189.7 378.6,203.3 C384.0,216.9 382.9,233.1 388.2,246.7 C393.6,260.3 404.5,271.7 410.6,284.9 C416.8,298.2 420.2,312.6 425.2,326.3 C430.2,340.0 435.0,353.8 440.8,367.3 C446.6,380.7 455.0,393.1 459.8,406.9 C464.7,420.7 468.3,442.8 470.0,450.0"/><path d="M1818.2,1432.4 C1822.0,1426.1 1833.5,1407.1 1841.1,1394.5 C1848.8,1381.9 1855.6,1368.8 1864.1,1356.7 C1872.7,1344.6 1884.3,1334.5 1892.2,1322.0 C1900.1,1309.6 1904.3,1294.8 1911.7,1282.0 C1919.0,1269.2 1928.7,1257.9 1936.4,1245.3 C1944.2,1232.7 1950.2,1219.1 1958.1,1206.6 C1965.9,1194.1 1975.5,1182.7 1983.3,1170.2 C1991.1,1157.7 2001.1,1137.9 2004.7,1131.4"/><path d="M2004.7,1131.4 C2009.3,1126.5 2023.6,1112.0 2032.7,1102.0 C2041.8,1091.9 2049.0,1080.0 2059.4,1071.2 C2069.7,1062.4 2084.3,1057.7 2095.0,1049.2 C2105.7,1040.7 2114.2,1030.1 2123.4,1020.2 C2132.7,1010.3 2141.3,999.8 2150.3,989.7 C2159.3,979.5 2168.8,969.9 2177.5,959.4 C2186.1,948.8 2193.3,937.0 2202.0,926.5 C2210.7,916.1 2220.1,906.4 2229.6,896.7 C2239.0,887.0 2248.7,877.5 2258.6,868.3 C2268.6,859.0 2284.1,845.8 2289.2,841.3"/><path d="M2251.3,164.1 L2230.4,199.1"/><path d="M2095.5,536.4 C2097.0,529.7 2099.3,508.9 2104.9,496.7 C2110.4,484.4 2123.2,475.0 2128.9,462.8 C2134.6,450.6 2134.0,435.8 2139.1,423.4 C2144.3,411.0 2155.0,400.8 2159.9,388.3 C2164.9,375.8 2163.7,360.8 2168.9,348.4 C2174.2,336.0 2185.4,326.0 2191.3,313.9 C2197.3,301.8 2202.0,289.2 2204.9,275.8 C2207.8,262.5 2204.6,246.8 2208.9,234.0 C2213.1,221.2 2226.8,204.9 2230.4,199.1"/><path d="M2095.5,536.4 C2099.4,541.7 2113.4,556.7 2119.4,568.6 C2125.4,580.6 2125.1,596.3 2131.4,608.0 C2137.7,619.8 2150.5,627.7 2157.2,639.2 C2163.9,650.7 2164.5,665.9 2171.5,677.2 C2178.5,688.6 2191.2,696.5 2199.0,707.4 C2206.7,718.3 2215.0,736.6 2218.2,742.5"/><path d="M2289.2,841.3 C2284.4,836.4 2268.3,823.0 2260.7,811.9 C2253.0,800.7 2250.4,785.9 2243.3,774.4 C2236.2,762.8 2222.4,747.8 2218.2,742.5"/><path d="M2251.3,164.1 C2246.8,158.4 2234.7,140.0 2224.3,129.8 C2214.0,119.6 2200.4,112.5 2189.3,103.0 C2178.1,93.6 2167.4,83.8 2157.6,73.1 C2147.7,62.5 2138.7,51.1 2130.2,39.1 C2121.7,27.2 2116.0,12.6 2106.8,1.4 C2097.5,-9.8 2086.2,-19.1 2074.8,-28.3 C2063.4,-37.5 2049.3,-44.0 2038.4,-53.8 C2027.6,-63.5 2019.9,-76.1 2009.9,-86.7 C1999.9,-97.2 1988.8,-106.7 1978.6,-116.9 C1968.3,-127.2 1957.1,-136.5 1948.3,-148.2 C1939.5,-159.8 1935.7,-176.2 1925.9,-186.9 C1916.2,-197.6 1900.2,-202.5 1889.8,-212.6 C1879.3,-222.7 1867.6,-241.6 1863.2,-247.3"/><path d="M1863.2,-247.3 C1860.3,-252.2 1851.7,-266.9 1845.5,-276.5 C1839.3,-286.0 1832.3,-295.0 1826.1,-304.5 C1819.9,-314.0 1811.3,-328.7 1808.4,-333.5"/><path d="M2095.5,536.4 C2089.0,537.3 2069.6,542.2 2056.6,542.2 C2043.6,542.1 2030.4,536.3 2017.3,536.1 C2004.3,535.8 1985.0,540.0 1978.5,540.8"/><path d="M2230.4,199.1 C2223.6,200.9 2203.6,208.3 2189.9,209.9 C2176.1,211.5 2161.4,206.5 2147.7,208.5 C2134.0,210.4 2121.2,219.1 2107.5,221.5 C2093.8,223.9 2079.5,221.3 2065.7,222.9 C2051.9,224.6 2038.6,229.3 2024.9,231.5 C2011.2,233.8 1997.6,236.3 1983.6,236.4 C1969.6,236.6 1954.9,231.7 1941.0,232.4 C1927.1,233.0 1913.7,237.4 1900.2,240.4 C1886.6,243.4 1866.3,248.6 1859.5,250.3"/><path d="M1859.5,250.3 C1856.9,256.2 1850.7,274.8 1843.8,285.8 C1837.0,296.7 1824.4,304.6 1818.5,316.1 C1812.7,327.6 1814.0,342.9 1808.7,354.8 C1803.5,366.6 1790.7,381.7 1787.0,387.0"/><path d="M1787.0,387.0 C1792.4,392.1 1809.6,406.3 1819.5,417.4 C1829.3,428.4 1836.2,442.4 1846.3,453.3 C1856.3,464.1 1868.7,472.7 1879.7,482.5 C1890.8,492.4 1907.0,507.5 1912.5,512.5"/><path d="M1978.5,540.8 C1972.8,538.9 1955.1,534.5 1944.1,529.8 C1933.1,525.1 1917.8,515.4 1912.5,512.5"/><path d="M2004.7,1131.4 C2002.4,1124.4 1998.2,1101.9 1991.0,1089.2 C1983.8,1076.5 1969.6,1067.3 1961.5,1055.1 C1953.4,1042.8 1947.7,1029.3 1942.3,1015.7 C1936.9,1002.1 1935.4,986.5 1928.9,973.4 C1922.5,960.3 1910.8,949.9 1903.6,937.2 C1896.5,924.4 1888.9,903.7 1886.0,897.0"/><path d="M2218.2,742.5 C2211.2,744.6 2190.2,751.0 2176.2,755.4 C2162.3,759.7 2148.5,764.7 2134.4,768.5 C2120.3,772.3 2106.2,776.1 2091.7,778.3 C2077.3,780.6 2061.8,778.7 2047.5,781.7 C2033.3,784.7 2020.3,793.1 2006.0,796.4 C1991.8,799.8 1976.6,798.9 1962.3,801.7 C1948.0,804.4 1927.1,811.2 1920.0,813.1"/><path d="M1920.0,813.1 C1918.4,817.9 1913.7,832.3 1910.0,841.6 C1906.3,851.0 1901.8,860.0 1897.8,869.2 C1893.8,878.5 1887.9,892.4 1886.0,897.0"/><path d="M1723.7,208.3 C1729.5,203.5 1748.3,190.8 1758.2,179.9 C1768.1,168.9 1773.9,154.3 1783.0,142.7 C1792.1,131.1 1807.9,115.6 1812.8,110.1"/><path d="M1723.7,208.3 C1728.6,209.6 1743.3,213.8 1753.2,216.3 C1763.0,218.8 1777.9,222.0 1782.9,223.2"/><path d="M1812.8,110.1 C1813.1,116.8 1812.8,136.9 1814.5,150.0 C1816.2,163.2 1821.6,182.5 1823.0,189.0"/><path d="M1782.9,223.2 C1786.0,220.1 1794.9,210.3 1801.6,204.6 C1808.3,198.9 1819.5,191.6 1823.0,189.0"/><path d="M1859.5,250.3 C1856.1,245.4 1844.8,231.4 1838.7,221.2 C1832.6,211.0 1825.6,194.4 1823.0,189.0"/><path d="M1863.2,-247.3 C1861.3,-240.9 1854.5,-221.6 1851.9,-208.4 C1849.3,-195.3 1847.9,-182.0 1847.6,-168.5 C1847.3,-155.1 1850.3,-141.1 1849.9,-127.7 C1849.5,-114.2 1848.1,-100.9 1845.1,-87.9 C1842.1,-74.8 1835.5,-62.2 1831.9,-49.2 C1828.3,-36.2 1824.1,-23.3 1823.5,-9.9 C1822.9,3.5 1830.1,18.1 1828.2,31.3 C1826.4,44.5 1814.8,56.4 1812.2,69.5 C1809.6,82.7 1812.7,103.4 1812.8,110.1"/><path d="M1787.0,387.0 C1782.1,384.7 1767.7,376.6 1757.4,372.7 C1747.2,368.9 1731.0,365.5 1725.7,364.1"/><path d="M1723.1,358.7 L1725.7,364.1"/><path d="M1723.1,358.7 C1725.8,353.2 1734.5,336.8 1739.4,325.4 C1744.2,314.1 1748.1,302.3 1752.0,290.5 C1755.9,278.8 1757.7,266.1 1762.8,254.9 C1768.0,243.6 1779.5,228.5 1782.9,223.2"/><path d="M797.0,-279.7 C803.2,-275.7 823.7,-266.2 833.9,-255.8 C844.0,-245.4 847.4,-227.3 857.9,-217.4 C868.5,-207.5 885.6,-205.1 897.2,-196.3 C908.8,-187.5 922.4,-170.1 927.4,-164.9"/><path d="M605.6,-34.5 C608.5,-28.3 615.9,-8.9 623.0,2.8 C630.2,14.4 642.0,23.4 648.5,35.5 C654.9,47.6 655.5,62.9 661.5,75.2 C667.4,87.5 676.5,98.1 684.2,109.5 C691.9,120.8 700.4,131.7 707.9,143.2 C715.4,154.7 723.5,165.8 729.3,178.2 C735.1,190.6 736.6,205.4 742.6,217.7 C748.6,230.1 761.4,246.3 765.2,252.1"/><path d="M765.2,252.1 C772.5,252.7 794.6,253.0 808.8,255.6 C823.1,258.3 843.8,266.0 850.8,268.1"/><path d="M927.4,-164.9 C928.0,-157.6 931.2,-135.7 931.0,-121.2 C930.7,-106.7 927.6,-92.1 926.1,-77.6 C924.6,-63.1 922.0,-48.5 921.8,-34.0 C921.5,-19.4 923.6,-4.9 924.8,9.7 C926.1,24.2 930.1,38.8 929.3,53.3 C928.5,67.9 920.7,82.4 920.1,96.9 C919.5,111.4 924.8,133.3 925.7,140.6"/><path d="M925.7,140.6 C923.2,146.2 915.9,163.3 910.6,174.5 C905.3,185.7 900.5,197.2 894.1,207.7 C887.7,218.3 879.5,227.8 872.3,237.8 C865.1,247.9 854.4,263.0 850.8,268.1"/><path d="M927.4,-164.9 C932.9,-162.0 949.0,-152.6 960.4,-147.5 C971.7,-142.3 984.4,-139.6 995.6,-134.1 C1006.7,-128.6 1017.0,-121.5 1027.4,-114.6 C1037.7,-107.7 1052.7,-96.3 1057.8,-92.6"/><path d="M1057.8,-92.6 C1058.5,-85.7 1061.6,-64.9 1062.4,-51.0 C1063.2,-37.1 1060.9,-23.0 1062.4,-9.1 C1063.9,4.8 1069.9,18.3 1071.3,32.2 C1072.7,46.0 1071.7,60.1 1070.9,74.1 C1070.1,88.1 1066.8,102.3 1066.3,116.3 C1065.8,130.3 1066.4,144.2 1067.9,158.1 C1069.3,172.0 1073.1,185.7 1075.2,199.5 C1077.2,213.3 1079.3,234.1 1080.2,241.1"/><path d="M925.7,140.6 C926.9,146.2 929.5,163.3 932.4,174.3 C935.3,185.4 938.8,196.3 943.1,206.9 C947.5,217.6 955.1,227.3 958.4,238.3 C961.7,249.2 962.1,267.0 962.8,272.7"/><path d="M1080.2,241.1 C1073.9,243.9 1055.5,253.3 1042.8,257.9 C1030.0,262.5 1017.0,266.2 1003.7,268.7 C990.4,271.1 969.6,272.0 962.8,272.7"/><path d="M1912.5,512.5 C1905.2,513.9 1882.7,516.9 1868.5,521.1 C1854.3,525.4 1841.3,533.4 1827.2,538.0 C1813.1,542.5 1797.5,542.3 1783.9,548.5 C1770.3,554.7 1759.7,569.7 1745.9,575.1 C1732.1,580.5 1715.4,577.3 1701.0,581.0 C1686.6,584.7 1673.6,592.6 1659.5,597.1 C1645.4,601.6 1630.3,603.2 1616.2,607.9 C1602.1,612.5 1581.9,622.1 1575.0,625.0"/><path d="M1725.7,364.1 C1720.9,368.1 1707.7,381.7 1697.0,388.2 C1686.3,394.7 1671.7,395.9 1661.4,403.0 C1651.1,410.0 1639.5,426.0 1635.1,430.6"/><path d="M1575.0,625.0 L1557.2,619.3"/><path d="M1553.5,572.0 C1554.2,575.9 1557.2,587.6 1557.8,595.4 C1558.4,603.3 1557.3,615.3 1557.2,619.3"/><path d="M1553.5,572.0 L1564.4,540.8"/><path d="M1635.1,430.6 C1631.1,436.6 1619.4,455.0 1611.0,467.0 C1602.7,478.9 1593.0,490.0 1585.2,502.3 C1577.4,514.6 1567.9,534.4 1564.4,540.8"/><path d="M1637.0,806.7 C1638.3,800.3 1643.3,781.3 1644.5,768.5 C1645.7,755.6 1644.5,742.7 1644.2,729.8 C1643.9,717.0 1643.1,697.6 1642.9,691.2"/><path d="M1637.0,806.7 C1641.9,808.7 1656.1,815.1 1665.9,818.5 C1675.7,822.0 1690.8,826.0 1695.8,827.5"/><path d="M1695.8,827.5 L1705.5,818.8"/><path d="M1705.5,818.8 C1705.8,813.4 1707.1,797.0 1707.4,786.2 C1707.7,775.3 1708.3,764.4 1707.2,753.6 C1706.1,742.9 1701.9,726.8 1700.8,721.4"/><path d="M1642.9,691.2 C1647.8,693.5 1662.7,700.2 1672.4,705.3 C1682.0,710.3 1696.1,718.7 1700.8,721.4"/><path d="M1057.0,837.9 C1053.1,843.8 1041.4,861.7 1033.5,873.6 C1025.7,885.5 1017.2,897.0 1009.7,909.1 C1002.3,921.2 995.0,933.4 988.9,946.3 C982.8,959.2 980.1,974.0 973.2,986.4 C966.4,998.9 955.5,1009.0 947.5,1020.8 C939.6,1032.6 932.1,1044.7 925.5,1057.3 C918.9,1069.9 914.4,1083.7 907.8,1096.3 C901.2,1108.9 892.7,1120.4 886.0,1132.9 C879.3,1145.5 874.8,1159.2 867.8,1171.6 C860.8,1184.0 851.7,1195.2 844.2,1207.2 C836.6,1219.3 828.7,1231.1 822.7,1244.0 C816.6,1256.9 814.8,1272.2 807.9,1284.7 C801.1,1297.2 786.0,1313.1 781.6,1318.8"/><path d="M1057.0,837.9 L1045.1,824.0"/><path d="M1045.1,824.0 C1039.6,826.5 1023.4,834.4 1012.2,838.9 C1001.1,843.5 988.9,846.1 978.0,851.2 C967.1,856.3 957.1,863.2 946.7,869.3 C936.4,875.4 926.0,881.5 915.7,887.8 C905.5,894.1 890.3,904.0 885.2,907.3"/><path d="M885.2,907.3 C881.2,913.3 869.9,931.8 861.0,943.1 C852.1,954.5 840.5,963.8 831.6,975.2 C822.8,986.6 815.8,999.4 807.9,1011.4 C799.9,1023.5 793.0,1036.2 784.0,1047.5 C775.0,1058.8 761.8,1067.1 754.0,1079.2 C746.2,1091.3 744.9,1108.3 737.1,1120.4 C729.2,1132.5 711.9,1146.6 706.9,1151.9"/><path d="M706.9,1151.9 C708.8,1157.7 712.6,1176.0 718.6,1186.7 C724.6,1197.4 737.5,1205.0 742.8,1215.9 C748.1,1226.9 746.4,1241.0 750.4,1252.6 C754.5,1264.1 761.7,1274.3 766.9,1285.3 C772.1,1296.3 779.2,1313.2 781.6,1318.8"/><path d="M790.9,1341.4 C796.4,1337.1 812.2,1322.7 824.3,1315.5 C836.3,1308.4 851.1,1305.4 863.2,1298.4 C875.4,1291.4 885.4,1281.1 897.1,1273.4 C908.8,1265.7 921.1,1258.9 933.5,1252.1 C945.8,1245.4 959.8,1241.4 971.2,1233.1 C982.5,1224.9 990.9,1212.0 1001.6,1202.6 C1012.3,1193.3 1023.3,1184.6 1035.2,1177.1 C1047.1,1169.7 1060.2,1164.1 1072.8,1157.9 C1085.5,1151.7 1099.0,1146.9 1111.1,1139.7 C1123.1,1132.5 1139.5,1119.1 1145.2,1115.0"/><path d="M790.9,1341.4 L781.6,1318.8"/><path d="M1120.3,880.1 C1121.7,886.6 1126.4,905.9 1128.6,918.8 C1130.7,931.8 1133.4,944.7 1133.2,957.9 C1132.9,971.1 1126.8,985.0 1127.1,998.1 C1127.3,1011.3 1132.2,1024.0 1134.6,1036.9 C1137.1,1049.8 1140.1,1062.7 1141.8,1075.7 C1143.6,1088.7 1144.6,1108.4 1145.2,1115.0"/><path d="M1120.3,880.1 C1115.3,876.1 1101.2,863.1 1090.6,856.0 C1080.1,849.0 1062.6,840.9 1057.0,837.9"/><path d="M394.1,829.4 C400.4,833.1 420.0,843.3 432.0,851.8 C444.0,860.2 453.5,872.2 465.9,880.1 C478.2,887.9 493.7,891.2 506.1,899.0 C518.4,906.8 534.5,922.2 540.2,926.8"/><path d="M540.2,926.8 C544.3,932.1 557.5,947.3 564.8,958.4 C572.2,969.5 577.4,982.3 584.4,993.7 C591.4,1005.1 599.2,1015.9 607.0,1026.7 C614.8,1037.6 622.3,1048.6 631.2,1058.6 C640.1,1068.6 652.1,1076.3 660.6,1086.6 C669.1,1096.9 674.4,1109.6 682.1,1120.4 C689.9,1131.3 702.8,1146.6 706.9,1151.9"/><path d="M1182.1,821.0 C1187.7,822.9 1204.4,828.6 1215.6,832.3 C1226.8,836.1 1238.4,838.8 1249.1,843.6 C1259.8,848.5 1274.8,858.4 1280.0,861.3"/><path d="M1182.1,821.0 C1184.1,815.5 1189.6,798.8 1194.4,788.0 C1199.2,777.2 1206.6,767.5 1210.8,756.5 C1214.9,745.5 1217.7,727.7 1219.1,722.0"/><path d="M1219.1,722.0 L1236.1,702.6"/><path d="M1236.1,702.6 C1241.0,708.2 1254.8,725.7 1265.3,736.0 C1275.8,746.3 1287.7,755.1 1299.1,764.4 C1310.4,773.8 1327.8,787.5 1333.5,792.1"/><path d="M1333.5,792.1 C1328.4,797.4 1311.9,812.3 1303.0,823.8 C1294.1,835.4 1283.8,855.1 1280.0,861.3"/><path d="M1120.3,880.1 C1123.7,875.5 1133.5,861.3 1140.8,852.4 C1148.2,843.6 1160.3,831.3 1164.2,827.1"/><path d="M1278.3,904.5 C1277.4,911.0 1275.8,931.1 1272.5,943.9 C1269.1,956.7 1262.0,968.4 1258.3,981.1 C1254.6,993.8 1253.2,1007.1 1250.3,1020.0 C1247.4,1032.8 1244.7,1045.8 1240.8,1058.4 C1236.8,1071.0 1228.9,1089.4 1226.6,1095.6"/><path d="M1278.3,904.5 L1280.0,861.3"/><path d="M1226.6,1095.6 C1219.8,1097.3 1199.6,1102.9 1186.1,1106.1 C1172.5,1109.3 1152.0,1113.5 1145.2,1115.0"/><path d="M1164.2,827.1 L1182.1,821.0"/><path d="M1110.0,749.8 C1116.1,748.6 1134.7,745.3 1146.8,742.2 C1158.9,739.1 1170.7,734.6 1182.7,731.2 C1194.8,727.8 1213.0,723.5 1219.1,722.0"/><path d="M1110.0,749.8 C1113.3,753.9 1124.3,765.4 1129.8,774.4 C1135.3,783.4 1137.3,794.8 1143.0,803.6 C1148.8,812.3 1160.7,823.2 1164.2,827.1"/><path d="M765.2,252.1 C763.8,258.0 757.4,275.8 756.8,287.8 C756.2,299.8 761.2,312.2 761.5,324.3 C761.9,336.4 759.2,354.4 758.8,360.4"/><path d="M856.0,275.1 L850.8,268.1"/><path d="M856.0,275.1 C855.7,281.0 855.9,298.8 854.1,310.3 C852.3,321.8 846.6,338.7 845.2,344.3"/><path d="M845.2,344.3 C838.1,346.5 817.3,354.5 802.9,357.2 C788.5,359.9 766.1,359.9 758.8,360.4"/><path d="M1668.2,62.0 C1669.5,68.5 1670.7,88.9 1675.9,101.0 C1681.1,113.1 1695.0,122.3 1699.6,134.6 C1704.2,146.9 1700.2,162.1 1703.4,174.9 C1706.6,187.7 1716.3,205.2 1718.8,211.3"/><path d="M1668.2,62.0 C1665.7,68.0 1657.9,86.1 1653.1,98.3 C1648.2,110.5 1641.5,129.0 1639.2,135.1"/><path d="M1639.2,135.1 C1643.1,140.3 1656.3,154.8 1662.8,166.0 C1669.4,177.1 1671.9,191.0 1678.7,202.0 C1685.4,213.1 1699.3,227.1 1703.5,232.1"/><path d="M1718.8,211.3 L1703.5,232.1"/><path d="M1808.4,-333.5 C1804.3,-329.0 1793.2,-314.3 1784.3,-306.3 C1775.3,-298.2 1759.6,-288.7 1754.6,-285.2"/><path d="M1754.6,-285.2 C1753.6,-277.8 1752.2,-255.1 1748.8,-240.6 C1745.3,-226.1 1737.0,-212.8 1733.6,-198.3 C1730.3,-183.7 1733.1,-167.7 1728.7,-153.4 C1724.2,-139.2 1711.0,-127.1 1706.9,-112.7 C1702.8,-98.4 1706.2,-82.2 1704.2,-67.3 C1702.1,-52.5 1697.8,-38.2 1694.7,-23.6 C1691.5,-9.0 1689.6,5.8 1685.1,20.1 C1680.7,34.4 1671.0,55.0 1668.2,62.0"/><path d="M1723.7,208.3 L1718.8,211.3"/><path d="M1612.6,168.9 C1615.8,175.2 1624.8,194.5 1631.8,206.7 C1638.9,218.9 1647.7,230.2 1654.9,242.3 C1662.1,254.5 1671.7,273.4 1675.0,279.6"/><path d="M1612.6,168.9 L1639.2,135.1"/><path d="M1687.1,289.1 L1675.0,279.6"/><path d="M1687.1,289.1 C1688.7,284.4 1693.5,270.4 1696.2,260.9 C1698.9,251.4 1702.3,236.9 1703.5,232.1"/><path d="M1723.1,358.7 L1698.8,324.3"/><path d="M1698.8,324.3 L1687.1,289.1"/><path d="M1158.2,451.7 C1161.3,458.2 1170.1,478.0 1176.7,490.8 C1183.4,503.5 1194.6,522.1 1198.1,528.3"/><path d="M1158.2,451.7 C1160.3,447.7 1167.3,436.1 1170.9,427.9 C1174.5,419.8 1178.5,406.8 1180.0,402.6"/><path d="M1180.0,402.6 C1186.4,406.5 1204.8,419.5 1218.2,425.8 C1231.6,432.0 1253.4,437.7 1260.5,440.1"/><path d="M1198.1,528.3 C1201.9,523.7 1214.5,510.5 1220.9,500.3 C1227.3,490.1 1229.9,477.3 1236.5,467.3 C1243.1,457.2 1256.5,444.6 1260.5,440.1"/><path d="M1201.3,567.2 L1196.5,533.9"/><path d="M1201.3,567.2 C1195.4,567.8 1177.7,568.7 1165.9,570.4 C1154.2,572.1 1142.6,575.4 1130.9,577.4 C1119.1,579.4 1107.5,582.4 1095.6,582.6 C1083.8,582.7 1065.7,579.2 1059.7,578.6"/><path d="M1196.5,533.9 C1191.9,531.9 1177.7,526.5 1168.7,522.1 C1159.6,517.7 1151.2,511.7 1142.0,507.6 C1132.8,503.5 1118.1,499.3 1113.4,497.6"/><path d="M1113.4,497.6 C1108.4,501.4 1094.2,513.5 1083.8,520.2 C1073.4,526.9 1056.6,535.0 1051.1,538.0"/><path d="M1059.7,578.6 L1051.1,538.0"/><path d="M1120.8,474.2 L1113.4,497.6"/><path d="M1120.8,474.2 L1158.2,451.7"/><path d="M1198.1,528.3 L1196.5,533.9"/><path d="M1048.8,620.6 L1059.7,578.6"/><path d="M1048.8,620.6 C1055.0,623.9 1074.0,633.1 1086.1,640.3 C1098.1,647.5 1115.2,660.0 1121.0,663.9"/><path d="M1121.0,663.9 C1128.2,663.0 1149.6,659.7 1164.0,658.4 C1178.4,657.1 1200.1,656.5 1207.3,656.2"/><path d="M1201.3,567.2 L1207.3,574.9"/><path d="M1207.3,574.9 C1207.0,581.7 1205.4,602.0 1205.4,615.5 C1205.4,629.1 1207.0,649.4 1207.3,656.2"/><path d="M1110.0,749.8 L1109.0,749.4"/><path d="M1109.0,749.4 C1110.0,742.2 1113.2,720.9 1115.2,706.7 C1117.2,692.4 1120.0,671.0 1121.0,663.9"/><path d="M1236.1,702.6 L1234.8,690.3"/><path d="M1207.3,656.2 L1234.8,690.3"/><path d="M1547.0,627.0 C1540.6,623.5 1521.6,613.1 1508.9,606.0 C1496.2,599.0 1484.2,590.8 1471.0,584.8 C1457.8,578.7 1442.8,576.4 1429.9,569.8 C1417.0,563.2 1406.4,552.0 1393.6,545.3 C1380.8,538.6 1359.8,532.1 1353.0,529.4"/><path d="M1547.0,627.0 L1545.2,628.8"/><path d="M1545.2,628.8 C1538.3,627.4 1517.8,620.2 1503.7,620.2 C1489.7,620.2 1475.1,629.8 1461.1,628.7 C1447.2,627.7 1434.0,616.5 1420.1,614.0 C1406.3,611.6 1392.1,614.0 1378.1,614.1 C1364.1,614.1 1343.1,614.2 1336.1,614.3"/><path d="M1336.1,614.3 C1333.6,609.6 1325.3,595.9 1321.3,586.2 C1317.2,576.5 1313.3,561.1 1311.7,556.0"/><path d="M1353.0,529.4 C1349.6,531.7 1339.4,538.5 1332.5,543.0 C1325.6,547.4 1315.1,553.8 1311.7,556.0"/><path d="M1207.3,574.9 C1213.1,574.1 1230.2,571.3 1241.8,569.9 C1253.3,568.6 1265.2,569.3 1276.6,566.8 C1287.9,564.4 1304.2,557.1 1309.7,555.2"/><path d="M1234.8,690.3 C1239.4,687.4 1252.9,678.1 1262.4,672.8 C1271.9,667.6 1282.3,663.8 1291.8,658.6 C1301.4,653.4 1315.1,644.6 1319.7,641.8"/><path d="M1336.1,614.3 L1319.7,641.8"/><path d="M1311.7,556.0 L1309.7,555.2"/><path d="M1260.5,440.1 L1269.4,438.7"/><path d="M1309.7,555.2 C1308.3,548.4 1305.1,527.8 1301.3,514.6 C1297.5,501.5 1292.1,488.8 1286.8,476.2 C1281.4,463.5 1272.3,445.0 1269.4,438.7"/><path d="M1292.0,336.8 C1286.8,335.9 1271.4,331.4 1261.0,331.2 C1250.7,331.1 1240.3,335.3 1229.9,335.9 C1219.5,336.6 1204.0,335.1 1198.9,334.9"/><path d="M1292.0,336.8 C1291.2,341.9 1287.9,357.0 1287.5,367.3 C1287.1,377.5 1290.2,388.1 1289.5,398.3 C1288.9,408.5 1284.5,423.5 1283.5,428.6"/><path d="M1167.8,383.9 C1170.6,379.9 1179.4,368.4 1184.6,360.2 C1189.8,352.0 1196.5,339.1 1198.9,334.9"/><path d="M1167.8,383.9 L1180.0,402.6"/><path d="M1283.5,428.6 L1269.4,438.7"/><path d="M1237.6,239.5 C1232.0,241.6 1214.8,247.1 1203.9,252.1 C1193.1,257.1 1177.9,266.7 1172.6,269.6"/><path d="M1237.6,239.5 C1237.3,233.1 1236.8,213.7 1236.2,200.8 C1235.6,187.9 1236.0,174.9 1233.9,162.2 C1231.8,149.4 1225.1,137.0 1223.5,124.2 C1221.9,111.4 1224.1,91.8 1224.2,85.3"/><path d="M1222.2,76.4 L1224.2,85.3"/><path d="M1222.2,76.4 C1219.4,82.4 1210.1,100.0 1205.1,112.2 C1200.0,124.3 1196.3,136.9 1192.1,149.3 C1188.0,161.7 1183.3,174.0 1180.3,186.8 C1177.4,199.6 1177.3,213.3 1174.4,226.1 C1171.5,238.9 1164.9,257.4 1163.0,263.7"/><path d="M1163.0,263.7 L1172.6,269.6"/><path d="M1057.8,-92.6 C1064.1,-90.0 1082.5,-80.5 1095.6,-77.1 C1108.7,-73.6 1123.6,-75.9 1136.5,-71.8 C1149.4,-67.6 1160.3,-56.5 1173.1,-52.2 C1186.0,-48.0 1207.0,-47.1 1213.8,-46.1"/><path d="M1213.8,-46.1 L1220.8,-7.4"/><path d="M1080.2,241.1 L1098.1,268.0"/><path d="M1098.1,268.0 C1103.5,268.1 1119.9,269.3 1130.7,268.6 C1141.6,267.9 1157.6,264.5 1163.0,263.7"/><path d="M1220.8,-7.4 C1221.1,-0.4 1222.8,20.5 1223.0,34.5 C1223.3,48.5 1222.4,69.4 1222.2,76.4"/><path d="M1889.9,794.4 L1866.8,817.4"/><path d="M1889.9,794.4 C1888.7,788.7 1883.5,771.3 1883.0,759.7 C1882.6,748.1 1886.3,736.3 1887.0,724.7 C1887.8,713.0 1887.7,701.3 1887.5,689.7 C1887.3,678.1 1886.1,660.6 1885.8,654.8"/><path d="M1866.8,817.4 C1861.4,814.4 1845.3,804.8 1834.1,799.6 C1822.8,794.4 1805.1,788.3 1799.3,786.1"/><path d="M1885.8,654.8 C1880.8,658.9 1864.9,670.4 1855.4,679.4 C1845.9,688.5 1839.1,700.8 1828.9,709.0 C1818.7,717.1 1800.0,725.1 1794.2,728.3"/><path d="M1794.2,728.3 C1794.3,733.1 1793.8,747.8 1794.6,757.4 C1795.5,767.0 1798.5,781.3 1799.3,786.1"/><path d="M1920.0,813.1 L1889.9,794.4"/><path d="M1886.0,897.0 L1877.4,887.3"/><path d="M1877.4,887.3 C1875.9,881.6 1870.2,864.6 1868.5,852.9 C1866.7,841.2 1867.1,823.3 1866.8,817.4"/><path d="M1978.5,540.8 C1974.1,545.1 1959.2,556.7 1952.1,566.6 C1944.9,576.6 1942.6,590.5 1935.7,600.7 C1928.8,610.9 1919.1,618.7 1910.8,627.8 C1902.5,636.8 1890.0,650.3 1885.8,654.8"/><path d="M1877.4,887.3 C1871.5,884.2 1854.0,873.9 1841.7,868.4 C1829.5,862.9 1810.1,856.9 1803.8,854.6"/><path d="M1803.8,854.6 C1802.6,850.2 1798.4,837.2 1796.8,828.4 C1795.3,819.5 1794.9,805.9 1794.5,801.4"/><path d="M1794.5,801.4 L1799.3,786.1"/><path d="M1575.0,625.0 C1579.3,628.2 1592.9,636.8 1600.4,644.2 C1608.0,651.6 1613.1,661.4 1620.1,669.2 C1627.2,677.1 1639.1,687.5 1642.9,691.2"/><path d="M1700.8,721.4 C1706.0,722.2 1721.4,724.8 1731.8,726.2 C1742.1,727.6 1752.4,729.5 1762.8,729.8 C1773.2,730.2 1789.0,728.5 1794.2,728.3"/><path d="M1705.5,818.8 L1734.6,829.8"/><path d="M1794.5,801.4 C1789.4,803.6 1773.9,809.5 1763.9,814.2 C1753.9,819.0 1739.5,827.2 1734.6,829.8"/><path d="M1008.9,661.6 C1004.5,663.4 990.7,667.7 982.3,672.1 C974.0,676.4 962.6,685.2 958.6,687.9"/><path d="M1008.9,661.6 C1011.7,667.1 1021.3,683.3 1026.1,694.8 C1030.9,706.4 1032.1,719.8 1037.8,730.9 C1043.5,742.0 1056.6,756.3 1060.3,761.4"/><path d="M958.6,687.9 C960.6,695.1 968.0,716.7 970.5,731.5 C973.0,746.3 973.1,769.0 973.6,776.6"/><path d="M973.6,776.6 C979.4,777.8 996.9,780.8 1008.2,784.1 C1019.6,787.4 1036.0,794.1 1041.6,796.2"/><path d="M1060.3,761.4 L1041.6,796.2"/><path d="M1048.8,620.6 L1019.6,643.2"/><path d="M1109.0,749.4 C1104.9,750.3 1092.7,753.2 1084.6,755.2 C1076.5,757.2 1064.4,760.4 1060.3,761.4"/><path d="M1019.6,643.2 L1008.9,661.6"/><path d="M919.4,815.8 C923.7,812.3 936.4,801.3 945.5,794.8 C954.5,788.3 968.9,779.6 973.6,776.6"/><path d="M919.4,815.8 C917.0,820.7 909.5,835.3 905.5,845.3 C901.4,855.4 898.5,865.9 895.1,876.2 C891.7,886.5 886.9,902.1 885.2,907.3"/><path d="M1045.1,824.0 L1041.6,796.2"/><path d="M919.4,815.8 C917.4,809.1 911.4,789.1 907.3,775.8 C903.2,762.4 896.9,742.5 894.8,735.9"/><path d="M958.6,687.9 L945.3,688.0"/><path d="M945.3,688.0 C940.8,691.6 926.5,701.9 918.1,709.9 C909.7,717.8 898.7,731.6 894.8,735.9"/><path d="M540.2,926.8 C544.8,922.6 558.9,910.5 567.4,901.6 C576.0,892.7 583.0,882.2 591.6,873.3 C600.2,864.4 609.2,855.8 618.9,848.1 C628.6,840.4 641.0,835.4 650.0,827.0 C659.1,818.5 669.4,802.5 673.3,797.7"/><path d="M673.3,797.7 C679.2,795.7 698.1,792.1 708.8,786.0 C719.5,779.8 726.5,766.3 737.4,760.6 C748.3,755.0 763.1,756.9 774.4,752.0 C785.7,747.0 800.1,734.4 805.2,730.9"/><path d="M805.2,730.9 C812.6,732.2 834.8,737.6 849.7,738.4 C864.7,739.3 887.3,736.3 894.8,735.9"/><path d="M470.0,450.0 C476.7,450.1 496.9,450.2 510.4,450.3 C523.9,450.5 537.3,451.8 550.8,451.0 C564.2,450.3 577.7,445.9 591.2,445.8 C604.6,445.7 618.1,449.8 631.6,450.5 C645.0,451.2 665.2,450.1 672.0,450.0"/><path d="M758.8,360.4 L750.0,374.6"/><path d="M750.0,374.6 C745.0,379.7 730.1,395.2 720.1,405.5 C710.2,415.7 695.3,431.2 690.4,436.4"/><path d="M672.0,450.0 L690.4,436.4"/><path d="M701.5,737.2 C706.6,732.6 723.2,719.7 732.3,709.2 C741.5,698.7 745.9,683.4 756.5,674.3 C767.0,665.2 784.8,663.5 795.5,654.6 C806.2,645.7 816.5,626.4 820.7,620.8"/><path d="M701.5,737.2 C703.9,730.7 711.5,711.1 716.1,697.8 C720.7,684.6 723.5,670.7 729.0,657.8 C734.4,644.9 743.6,633.3 748.6,620.2 C753.6,607.2 757.3,586.1 759.1,579.3"/><path d="M820.7,620.8 C815.6,617.3 800.5,606.5 790.2,599.6 C779.9,592.7 764.3,582.7 759.1,579.3"/><path d="M673.3,797.7 C675.6,792.6 682.6,777.5 687.3,767.4 C692.0,757.3 699.1,742.3 701.5,737.2"/><path d="M717.7,492.4 C714.0,488.7 703.4,477.2 695.8,470.2 C688.2,463.1 675.9,453.4 672.0,450.0"/><path d="M717.7,492.4 C720.7,496.8 731.4,509.2 735.9,518.7 C740.4,528.2 740.9,539.7 744.8,549.5 C748.6,559.3 756.6,573.0 758.9,577.7"/><path d="M759.1,579.3 L758.9,577.7"/><path d="M1603.9,965.0 C1605.9,959.4 1611.8,942.6 1616.0,931.6 C1620.3,920.5 1627.3,904.2 1629.5,898.7"/><path d="M1603.9,965.0 C1603.8,972.3 1602.2,994.5 1603.0,1009.0 C1603.8,1023.6 1605.5,1038.0 1608.9,1052.2 C1612.3,1066.5 1620.6,1080.1 1623.5,1094.4 C1626.3,1108.6 1623.9,1123.6 1626.1,1138.0 C1628.2,1152.4 1634.6,1166.2 1636.3,1180.6 C1638.1,1195.1 1636.6,1217.2 1636.6,1224.5"/><path d="M1682.8,857.6 C1688.3,860.1 1704.8,867.5 1715.7,872.8 C1726.6,878.0 1742.7,886.3 1748.1,889.0"/><path d="M1682.8,857.6 C1678.1,860.7 1663.5,869.3 1654.6,876.1 C1645.7,883.0 1633.7,894.9 1629.5,898.7"/><path d="M1714.2,1300.1 C1710.5,1295.3 1700.6,1279.5 1692.0,1271.2 C1683.3,1262.8 1671.5,1257.7 1662.3,1250.0 C1653.0,1242.2 1640.9,1228.8 1636.6,1224.5"/><path d="M1714.2,1300.1 C1714.6,1292.7 1715.5,1270.3 1716.3,1255.5 C1717.2,1240.6 1717.0,1225.6 1719.3,1210.9 C1721.5,1196.2 1726.6,1181.8 1729.9,1167.2 C1733.2,1152.6 1738.4,1138.2 1738.9,1123.3 C1739.3,1108.4 1731.2,1092.6 1732.5,1077.8 C1733.7,1063.0 1744.9,1049.2 1746.2,1034.4 C1747.5,1019.6 1740.2,1003.8 1740.4,988.9 C1740.6,974.0 1744.8,959.5 1747.4,944.8 C1750.1,930.1 1754.9,908.2 1756.4,900.9"/><path d="M1756.4,900.9 L1748.1,889.0"/><path d="M1695.8,827.5 L1682.8,857.6"/><path d="M1734.6,829.8 C1736.0,834.7 1741.0,849.1 1743.3,859.0 C1745.5,868.8 1747.3,884.0 1748.1,889.0"/><path d="M1637.0,806.7 L1624.4,829.2"/><path d="M1624.4,829.2 L1622.8,842.4"/><path d="M1622.8,842.4 C1623.2,847.1 1623.8,861.3 1624.9,870.7 C1626.0,880.1 1628.8,894.0 1629.5,898.7"/><path d="M1818.2,1432.4 C1813.6,1427.1 1799.2,1411.7 1790.3,1400.8 C1781.3,1390.0 1772.7,1378.9 1764.6,1367.5 C1756.5,1356.0 1749.9,1343.4 1741.5,1332.1 C1733.1,1320.9 1718.8,1305.4 1714.2,1300.1"/><path d="M1226.6,1095.6 C1233.8,1095.8 1255.8,1094.0 1269.9,1096.7 C1284.0,1099.4 1297.0,1109.7 1311.1,1111.9 C1325.3,1114.2 1340.7,1108.4 1355.0,1110.1 C1369.2,1111.8 1382.6,1119.0 1396.7,1122.0 C1410.7,1125.1 1432.1,1127.4 1439.2,1128.5"/><path d="M1439.2,1128.5 C1446.0,1131.1 1466.7,1138.8 1480.2,1144.5 C1493.7,1150.3 1507.1,1156.1 1520.0,1163.1 C1532.9,1170.1 1544.5,1179.6 1557.5,1186.5 C1570.4,1193.4 1584.3,1198.2 1597.5,1204.5 C1610.7,1210.9 1630.1,1221.2 1636.6,1224.5"/><path d="M1803.8,854.6 C1800.0,858.5 1788.7,870.7 1780.8,878.4 C1772.9,886.2 1760.4,897.2 1756.4,900.9"/><path d="M1553.5,572.0 C1548.7,568.1 1533.9,556.6 1524.5,548.4 C1515.2,540.2 1507.2,530.5 1497.4,522.8 C1487.6,515.0 1475.7,509.8 1465.8,502.2 C1455.9,494.6 1446.9,486.0 1438.0,477.3 C1429.1,468.5 1416.8,454.3 1412.5,449.7"/><path d="M1557.2,619.3 L1547.0,627.0"/><path d="M1353.0,529.4 C1355.3,524.7 1362.3,510.7 1366.7,501.1 C1371.1,491.6 1375.3,482.0 1379.1,472.3 C1383.0,462.6 1388.2,447.7 1390.1,442.8"/><path d="M1412.5,449.7 L1390.1,442.8"/><path d="M1564.4,540.8 C1562.2,535.1 1555.1,518.1 1551.4,506.4 C1547.7,494.6 1546.5,481.9 1542.2,470.4 C1537.9,458.9 1530.2,448.8 1525.7,437.4 C1521.3,425.9 1520.2,413.2 1515.5,401.8 C1510.8,390.5 1500.5,374.8 1497.5,369.4"/><path d="M1412.5,449.7 C1416.8,444.8 1428.5,428.7 1438.3,420.2 C1448.1,411.7 1461.6,407.1 1471.5,398.6 C1481.3,390.1 1493.1,374.2 1497.5,369.4"/><path d="M1283.5,428.6 C1289.3,430.0 1306.7,434.8 1318.4,437.2 C1330.1,439.7 1341.8,442.2 1353.8,443.1 C1365.7,444.0 1383.9,442.8 1389.9,442.7"/><path d="M1389.9,442.7 L1390.1,442.8"/><path d="M1295.7,241.2 L1332.2,248.0"/><path d="M1295.7,241.2 L1257.1,260.4"/><path d="M1348.9,280.2 C1346.2,284.1 1338.6,296.0 1333.0,303.5 C1327.4,311.0 1318.1,321.7 1315.1,325.3"/><path d="M1348.9,280.2 L1332.2,248.0"/><path d="M1256.5,275.1 L1257.1,260.4"/><path d="M1256.5,275.1 C1259.7,280.1 1269.8,294.7 1275.8,304.9 C1281.8,315.1 1289.6,331.0 1292.4,336.2"/><path d="M1292.4,336.2 L1315.1,325.3"/><path d="M1220.8,-7.4 C1223.3,-0.9 1228.5,19.6 1235.9,31.1 C1243.2,42.6 1258.1,49.8 1264.7,61.7 C1271.3,73.6 1270.1,90.0 1275.5,102.6 C1280.8,115.3 1288.6,126.5 1297.1,137.4 C1305.6,148.2 1318.9,156.3 1326.5,167.7 C1334.0,179.1 1339.6,199.4 1342.3,205.7"/><path d="M1342.3,205.7 L1332.2,248.0"/><path d="M1224.2,85.3 C1227.7,91.6 1239.9,109.6 1245.4,122.8 C1250.9,136.0 1251.1,151.6 1257.1,164.6 C1263.0,177.6 1274.4,188.1 1280.9,200.9 C1287.3,213.6 1293.2,234.5 1295.7,241.2"/><path d="M1237.6,239.5 L1257.1,260.4"/><path d="M1194.2,301.6 L1172.6,269.6"/><path d="M1194.2,301.6 C1199.2,298.9 1213.7,289.8 1224.1,285.4 C1234.4,280.9 1251.1,276.8 1256.5,275.1"/><path d="M1292.0,336.8 L1292.4,336.2"/><path d="M1198.9,334.9 L1194.2,301.6"/><path d="M1391.6,380.0 C1391.1,385.2 1388.6,400.8 1388.3,411.2 C1388.0,421.7 1389.7,437.4 1389.9,442.7"/><path d="M1391.6,380.0 C1387.3,377.0 1373.8,369.0 1365.6,362.5 C1357.4,355.9 1350.9,347.1 1342.5,340.9 C1334.1,334.7 1319.7,327.9 1315.1,325.3"/><path d="M1096.6,275.6 C1100.5,281.0 1113.5,296.6 1120.0,308.1 C1126.4,319.6 1129.8,332.8 1135.3,344.9 C1140.8,357.0 1150.0,374.6 1152.9,380.5"/><path d="M1096.6,275.6 C1092.1,281.0 1077.9,296.9 1069.3,308.1 C1060.7,319.3 1049.1,337.0 1045.0,342.8"/><path d="M1045.0,342.8 C1051.0,344.1 1069.5,346.4 1081.0,350.2 C1092.4,354.0 1102.9,360.3 1113.7,365.7 C1124.6,371.1 1140.6,379.7 1145.9,382.5"/><path d="M1152.9,380.5 L1145.9,382.5"/><path d="M1167.8,383.9 L1152.9,380.5"/><path d="M1098.1,268.0 L1096.6,275.6"/><path d="M1120.8,474.2 C1118.0,469.6 1110.3,455.8 1104.4,446.9 C1098.6,438.1 1088.9,425.5 1085.8,421.2"/><path d="M1085.8,421.2 C1091.1,418.5 1107.8,411.3 1117.8,404.9 C1127.8,398.4 1141.2,386.2 1145.9,382.5"/><path d="M1051.1,538.0 L1028.5,513.4"/><path d="M1085.8,421.2 L1067.7,421.5"/><path d="M1067.7,421.5 C1064.7,426.3 1053.1,439.4 1049.5,450.0 C1045.8,460.5 1049.3,474.0 1045.8,484.6 C1042.3,495.2 1031.4,508.6 1028.5,513.4"/><path d="M1019.6,643.2 C1014.6,639.4 999.4,628.2 989.8,620.1 C980.2,611.9 972.0,601.9 962.1,594.2 C952.1,586.6 935.5,577.3 930.1,573.9"/><path d="M930.1,573.9 C932.0,569.2 937.6,555.1 941.3,545.6 C945.0,536.2 950.6,522.0 952.4,517.3"/><path d="M952.4,517.3 L983.6,497.1"/><path d="M1028.5,513.4 C1024.8,511.9 1013.9,507.0 1006.4,504.3 C998.9,501.5 987.4,498.3 983.6,497.1"/><path d="M848.8,478.7 C843.9,481.0 829.6,488.8 819.6,492.6 C809.6,496.5 793.9,500.5 788.8,502.1"/><path d="M848.8,478.7 L878.6,505.0"/><path d="M788.8,502.1 C794.8,505.0 813.8,512.7 825.2,519.8 C836.6,526.8 851.8,540.4 857.2,544.5"/><path d="M878.6,505.0 L857.2,544.5"/><path d="M847.6,445.7 L848.8,478.7"/><path d="M847.6,445.7 C841.0,446.2 821.1,448.5 807.9,448.9 C794.8,449.2 781.6,449.3 768.6,447.5 C755.6,445.7 742.8,439.8 729.7,438.0 C716.7,436.1 696.9,436.6 690.4,436.4"/><path d="M717.7,492.4 C723.6,493.3 741.4,495.8 753.2,497.4 C765.1,499.0 782.8,501.3 788.8,502.1"/><path d="M858.3,559.3 C852.8,560.2 836.0,561.9 825.0,564.6 C814.1,567.4 803.9,573.6 792.8,575.8 C781.8,578.0 764.6,577.4 758.9,577.7"/><path d="M858.3,559.3 L857.2,544.5"/><path d="M918.5,666.2 C912.1,667.2 893.1,670.9 880.4,671.8 C867.6,672.8 848.3,671.7 841.8,671.7"/><path d="M918.5,666.2 C915.4,660.2 905.4,642.7 900.2,630.4 C895.0,618.0 889.4,598.6 887.2,592.3"/><path d="M887.2,592.3 L877.4,589.7"/><path d="M877.4,589.7 C873.9,592.4 863.1,599.8 856.7,605.6 C850.2,611.5 841.8,621.5 838.8,624.7"/><path d="M841.8,671.7 C842.0,667.7 843.6,655.8 843.1,648.0 C842.6,640.2 839.5,628.6 838.8,624.7"/><path d="M945.3,688.0 L918.5,666.2"/><path d="M805.2,730.9 C808.8,726.3 820.5,713.0 826.6,703.2 C832.7,693.3 839.3,676.9 841.8,671.7"/><path d="M930.1,573.9 C926.7,575.8 916.7,582.1 909.6,585.2 C902.4,588.2 890.9,591.1 887.2,592.3"/><path d="M952.4,517.3 C946.8,516.6 929.6,515.7 918.7,513.1 C907.7,510.5 891.9,503.8 886.5,501.9"/><path d="M886.5,501.9 L878.6,505.0"/><path d="M858.3,559.3 L877.4,589.7"/><path d="M820.7,620.8 L838.8,624.7"/><path d="M1622.8,842.4 C1618.2,840.1 1604.6,831.5 1594.7,828.5 C1584.9,825.6 1573.7,826.9 1563.6,824.7 C1553.4,822.5 1539.0,816.8 1534.1,815.2"/><path d="M1603.9,965.0 C1600.8,960.0 1592.5,944.0 1585.0,934.8 C1577.6,925.7 1566.7,919.2 1559.0,910.2 C1551.4,901.1 1542.5,885.6 1539.2,880.7"/><path d="M1539.2,880.7 C1538.8,875.3 1537.3,858.9 1536.4,848.0 C1535.6,837.1 1534.5,820.7 1534.1,815.2"/><path d="M1624.4,829.2 C1618.6,825.3 1601.5,813.6 1589.9,806.2 C1578.3,798.7 1566.2,791.9 1554.6,784.4 C1543.1,776.8 1526.3,764.7 1520.6,760.7"/><path d="M1534.1,815.2 C1533.1,810.6 1530.3,796.9 1528.0,787.8 C1525.7,778.7 1521.8,765.2 1520.6,760.7"/><path d="M1545.2,628.8 C1543.4,633.7 1540.0,649.6 1534.6,658.3 C1529.1,667.1 1518.5,672.9 1512.6,681.4 C1506.7,689.9 1501.4,704.8 1499.2,709.4"/><path d="M1499.2,709.4 C1500.6,713.9 1504.2,727.4 1507.8,736.0 C1511.3,744.5 1518.4,756.6 1520.6,760.7"/><path d="M1644.0,268.2 C1638.4,267.8 1621.4,267.4 1610.3,265.7 C1599.2,264.0 1582.9,259.4 1577.4,258.1"/><path d="M1644.0,268.2 C1638.6,263.0 1622.5,247.5 1612.0,236.9 C1601.5,226.4 1586.0,210.3 1580.8,204.9"/><path d="M1580.8,204.9 C1580.2,209.4 1578.1,222.6 1577.5,231.4 C1577.0,240.3 1577.4,253.6 1577.4,258.1"/><path d="M1612.6,168.9 L1594.7,177.3"/><path d="M1675.0,279.6 L1644.0,268.2"/><path d="M1594.7,177.3 L1579.2,197.5"/><path d="M1579.2,197.5 L1580.8,204.9"/><path d="M1698.8,324.3 C1692.2,323.9 1672.2,322.7 1658.9,322.3 C1645.6,321.9 1632.2,322.5 1618.9,322.0 C1605.6,321.5 1592.3,320.9 1579.1,319.1 C1565.9,317.3 1546.2,312.5 1539.7,311.2"/><path d="M1577.4,258.1 L1547.8,281.4"/><path d="M1539.7,311.2 L1547.8,281.4"/><path d="M1635.1,430.6 C1630.2,426.5 1616.1,413.2 1605.5,405.9 C1594.9,398.7 1580.7,395.7 1571.3,386.8 C1562.0,378.0 1558.6,361.9 1549.4,352.9 C1540.2,343.8 1521.7,336.0 1516.1,332.6"/><path d="M1539.7,311.2 L1516.1,332.6"/><path d="M1579.2,197.5 C1575.4,198.0 1563.7,198.9 1556.1,200.5 C1548.5,202.0 1537.4,205.7 1533.7,206.7"/><path d="M1533.7,206.7 L1522.2,226.1"/><path d="M1547.8,281.4 C1545.9,276.7 1540.7,262.3 1536.4,253.1 C1532.1,243.9 1524.6,230.6 1522.2,226.1"/><path d="M1497.5,369.4 L1504.1,335.8"/><path d="M1516.1,332.6 L1504.1,335.8"/><path d="M1391.6,380.0 C1395.1,376.0 1406.4,364.9 1412.4,356.5 C1418.4,348.1 1422.4,338.3 1427.7,329.4 C1432.9,320.4 1441.2,307.3 1443.9,302.9"/><path d="M1504.1,335.8 C1499.1,333.2 1483.7,325.5 1473.6,320.0 C1463.6,314.5 1448.8,305.7 1443.9,302.9"/><path d="M1754.6,-285.2 C1748.8,-281.8 1731.0,-272.0 1719.5,-264.8 C1708.1,-257.6 1697.8,-248.5 1685.9,-242.0 C1673.9,-235.5 1659.8,-232.6 1647.9,-226.0 C1636.1,-219.4 1625.5,-210.9 1614.9,-202.3 C1604.4,-193.6 1596.2,-181.2 1584.6,-174.2 C1573.1,-167.1 1557.5,-166.5 1545.4,-160.2 C1533.4,-154.0 1523.2,-144.6 1512.3,-136.6 C1501.4,-128.6 1485.2,-116.2 1479.8,-112.1"/><path d="M1213.8,-46.1 C1219.7,-46.4 1237.6,-46.6 1249.5,-47.6 C1261.3,-48.6 1273.1,-49.8 1284.7,-52.1 C1296.4,-54.3 1313.6,-59.5 1319.4,-61.0"/><path d="M1479.8,-112.1 C1473.2,-109.7 1453.7,-101.4 1440.1,-98.1 C1426.4,-94.7 1411.6,-95.1 1397.9,-91.9 C1384.2,-88.7 1371.0,-84.0 1357.9,-78.9 C1344.8,-73.7 1325.8,-64.0 1319.4,-61.0"/><path d="M1045.0,342.8 L1043.5,343.9"/><path d="M1067.7,421.5 L1056.3,409.6"/><path d="M1043.5,343.9 C1044.3,349.4 1046.2,366.1 1048.3,377.1 C1050.5,388.0 1055.0,404.2 1056.3,409.6"/><path d="M1439.2,1128.5 C1439.3,1121.4 1440.2,1100.0 1439.7,1085.8 C1439.3,1071.7 1438.4,1057.5 1436.5,1043.5 C1434.6,1029.4 1430.0,1015.6 1428.3,1001.5 C1426.6,987.4 1426.7,966.1 1426.4,959.0"/><path d="M1539.2,880.7 C1533.8,880.4 1517.4,878.8 1506.5,878.6 C1495.6,878.5 1479.2,879.8 1473.7,880.1"/><path d="M1473.7,880.1 C1471.7,884.9 1467.0,899.9 1462.0,908.8 C1457.0,917.8 1449.6,925.2 1443.7,933.6 C1437.7,942.0 1429.3,954.8 1426.4,959.0"/><path d="M1379.5,281.0 C1384.8,282.7 1400.8,287.6 1411.4,291.1 C1422.0,294.5 1437.9,299.9 1443.2,301.6"/><path d="M1379.5,281.0 C1380.2,273.8 1380.7,251.9 1383.7,237.8 C1386.8,223.8 1395.5,203.7 1397.9,196.8"/><path d="M1443.2,301.6 C1444.2,297.0 1446.7,282.9 1448.9,273.6 C1451.1,264.4 1455.3,250.7 1456.5,246.1"/><path d="M1456.5,246.1 C1452.0,241.7 1438.6,228.3 1429.2,219.8 C1419.8,211.4 1405.0,199.5 1400.1,195.4"/><path d="M1397.9,196.8 L1400.1,195.4"/><path d="M1348.9,280.2 L1379.5,281.0"/><path d="M1443.9,302.9 L1443.2,301.6"/><path d="M1342.3,205.7 C1346.9,205.1 1360.9,203.6 1370.2,202.1 C1379.5,200.6 1393.3,197.7 1397.9,196.8"/><path d="M1522.2,226.1 C1517.5,227.3 1503.5,231.6 1493.9,233.5 C1484.3,235.3 1469.7,236.6 1464.8,237.2"/><path d="M1464.8,237.2 L1456.5,246.1"/><path d="M1408.1,169.3 C1406.6,162.6 1403.7,141.7 1399.1,128.7 C1394.6,115.8 1386.9,104.0 1380.7,91.7 C1374.4,79.4 1366.6,67.8 1361.6,55.0 C1356.7,42.2 1355.5,27.9 1351.0,15.0 C1346.6,2.0 1340.4,-10.3 1335.1,-23.0 C1329.8,-35.7 1322.0,-54.7 1319.4,-61.0"/><path d="M1408.1,169.3 L1400.1,195.4"/><path d="M1469.1,185.0 L1459.9,171.4"/><path d="M1469.1,185.0 C1472.9,184.5 1484.5,182.8 1492.1,181.7 C1499.8,180.5 1511.3,178.5 1515.1,177.9"/><path d="M1459.9,171.4 C1461.8,165.1 1465.8,145.7 1471.2,133.6 C1476.6,121.6 1487.6,111.5 1492.1,99.2 C1496.6,86.9 1497.2,66.3 1498.2,59.7"/><path d="M1515.1,177.9 C1516.0,173.6 1518.7,160.8 1520.1,152.1 C1521.4,143.5 1522.7,130.4 1523.3,126.0"/><path d="M1523.3,126.0 C1521.4,120.4 1516.5,103.3 1512.3,92.2 C1508.2,81.2 1500.6,65.1 1498.2,59.7"/><path d="M1464.8,237.2 C1465.5,232.9 1467.9,219.9 1468.6,211.2 C1469.3,202.6 1469.0,189.4 1469.1,185.0"/><path d="M1408.1,169.3 C1412.4,170.0 1425.2,173.0 1433.9,173.3 C1442.5,173.7 1455.5,171.7 1459.9,171.4"/><path d="M1533.7,206.7 L1515.1,177.9"/><path d="M1479.8,-112.1 C1481.7,-105.0 1489.8,-84.2 1491.0,-69.9 C1492.3,-55.5 1487.5,-40.5 1487.4,-26.0 C1487.3,-11.5 1488.5,2.8 1490.3,17.1 C1492.1,31.4 1496.9,52.6 1498.2,59.7"/><path d="M1594.7,177.3 C1588.5,173.3 1569.4,162.3 1557.5,153.7 C1545.6,145.2 1529.0,130.6 1523.3,126.0"/><path d="M1043.5,343.9 L999.1,338.5"/><path d="M1056.3,409.6 C1051.2,410.5 1036.0,412.5 1026.0,414.6 C1016.0,416.7 1006.3,421.2 996.1,422.3 C986.0,423.4 970.3,421.4 965.1,421.3"/><path d="M999.1,338.5 C996.8,345.6 990.8,367.3 985.1,381.1 C979.5,394.9 968.4,414.6 965.1,421.3"/><path d="M962.8,272.7 L957.4,292.0"/><path d="M999.1,338.5 C995.5,334.7 984.5,323.6 977.6,315.9 C970.6,308.1 960.8,296.0 957.4,292.0"/><path d="M856.0,275.1 C863.0,276.7 884.4,280.1 897.9,284.6 C911.4,289.1 930.7,299.0 937.3,301.9"/><path d="M937.3,301.9 L957.4,292.0"/><path d="M983.6,497.1 C981.2,491.4 973.3,474.6 969.2,462.9 C965.1,451.3 960.7,433.2 958.9,427.3"/><path d="M958.9,427.3 L965.1,421.3"/><path d="M1393.3,904.5 L1403.1,912.9"/><path d="M1393.3,904.5 C1391.7,897.7 1388.4,876.9 1383.5,864.1 C1378.6,851.3 1369.7,840.0 1363.8,827.6 C1357.9,815.2 1350.7,795.9 1348.0,789.5"/><path d="M1403.1,912.9 C1406.4,906.4 1416.2,886.8 1422.7,873.7 C1429.2,860.6 1439.0,841.0 1442.2,834.4"/><path d="M1348.0,789.5 C1353.0,787.8 1368.5,783.8 1378.0,779.3 C1387.4,774.8 1400.4,765.4 1404.9,762.6"/><path d="M1442.2,834.4 C1440.8,828.1 1436.8,809.1 1433.8,796.6 C1430.8,784.0 1425.8,765.3 1424.1,759.0"/><path d="M1404.9,762.6 L1424.1,759.0"/><path d="M1278.3,904.5 C1284.7,905.6 1303.9,911.0 1316.7,911.3 C1329.4,911.6 1342.2,907.5 1355.0,906.4 C1367.8,905.2 1386.9,904.8 1393.3,904.5"/><path d="M1426.4,959.0 C1424.8,955.1 1420.4,942.8 1416.5,935.1 C1412.6,927.4 1405.3,916.6 1403.1,912.9"/><path d="M1333.5,792.1 L1348.0,789.5"/><path d="M1473.7,880.1 C1470.7,876.5 1460.9,866.5 1455.6,858.9 C1450.4,851.2 1444.4,838.5 1442.2,834.4"/><path d="M1319.7,641.8 C1323.1,646.9 1333.3,662.3 1339.9,672.8 C1346.5,683.2 1351.2,694.9 1359.3,704.3 C1367.5,713.6 1381.2,719.0 1388.8,728.7 C1396.4,738.5 1402.2,757.0 1404.9,762.6"/><path d="M1499.2,709.4 C1492.5,712.9 1471.6,722.1 1459.1,730.3 C1446.6,738.6 1430.0,754.2 1424.1,759.0"/><path d="M878.9,362.1 C877.2,366.5 872.8,379.7 868.8,388.0 C864.7,396.3 856.9,407.9 854.5,411.9"/><path d="M878.9,362.1 L899.3,360.4"/><path d="M899.3,360.4 C902.9,365.5 913.8,380.9 921.0,391.2 C928.2,401.5 938.8,417.1 942.3,422.3"/><path d="M859.4,432.9 L901.5,441.4"/><path d="M859.4,432.9 L854.5,411.9"/><path d="M901.5,441.4 C904.7,439.5 914.3,433.4 921.1,430.2 C927.9,427.0 938.8,423.6 942.3,422.3"/><path d="M845.2,344.3 L878.9,362.1"/><path d="M750.0,374.6 C755.8,376.7 773.3,382.6 784.8,387.0 C796.4,391.4 807.6,396.7 819.2,400.9 C830.8,405.0 848.6,410.1 854.5,411.9"/><path d="M937.3,301.9 C934.6,307.1 927.7,323.4 921.4,333.2 C915.0,342.9 903.0,355.9 899.3,360.4"/><path d="M958.9,427.3 L942.3,422.3"/><path d="M886.5,501.9 C888.3,497.0 894.7,482.5 897.2,472.5 C899.7,462.4 900.7,446.6 901.5,441.4"/><path d="M847.6,445.7 L859.4,432.9"/></g>
<g fill="none" stroke="#fdfbf0" stroke-width="1.35" stroke-opacity="0.72" stroke-linejoin="round" stroke-linecap="round"><path d="M1153.6,486.1 C1154.0,480.0 1154.9,461.6 1155.5,449.3 C1156.1,437.0 1157.5,424.8 1157.3,412.5 C1157.1,400.2 1154.5,386.8 1154.3,375.6 C1154.1,364.5 1156.2,355.6 1156.1,345.5 C1156.0,335.5 1147.9,323.8 1153.6,315.5 C1159.4,307.3 1179.0,303.8 1190.4,296.1 C1201.9,288.4 1213.0,277.1 1222.3,269.3 C1231.7,261.5 1238.9,256.3 1246.6,249.2 C1254.2,242.0 1259.0,232.8 1268.3,226.4 C1277.6,220.0 1296.7,213.4 1302.3,210.8"/><path d="M1153.6,486.1 C1159.5,483.1 1176.9,473.5 1189.0,467.7 C1201.1,461.9 1215.4,459.5 1226.1,451.5 C1236.9,443.5 1242.7,427.6 1253.5,419.7 C1264.3,411.8 1280.5,409.0 1291.0,404.1 C1301.4,399.2 1307.8,395.0 1316.2,390.5 C1324.7,386.1 1331.9,378.6 1341.7,377.4 C1351.4,376.2 1363.7,383.0 1374.8,383.6 C1386.0,384.2 1397.1,381.6 1408.3,381.0 C1419.4,380.4 1430.5,378.3 1441.7,380.1 C1452.8,381.9 1463.5,390.4 1475.1,391.9 C1486.8,393.4 1499.9,387.5 1511.5,388.9 C1523.2,390.4 1539.4,398.6 1545.0,400.6"/><path d="M1153.6,486.1 C1159.5,487.8 1176.9,493.1 1188.7,495.9 C1200.4,498.8 1212.7,499.9 1224.4,503.3 C1236.0,506.8 1246.2,511.5 1258.3,516.7 C1270.4,521.9 1284.1,528.7 1297.0,534.6 C1309.9,540.5 1322.7,546.7 1335.7,552.3 C1348.7,558.0 1368.4,566.0 1375.0,568.7"/><path d="M1153.6,486.1 C1156.0,492.8 1164.6,512.4 1167.7,526.0 C1170.8,539.5 1170.9,553.6 1172.2,567.5 C1173.5,581.4 1177.0,595.7 1175.6,609.2 C1174.3,622.7 1168.6,635.8 1164.0,648.7 C1159.5,661.6 1156.6,679.5 1148.3,686.8 C1140.0,694.0 1125.2,689.4 1114.1,692.3 C1103.0,695.3 1091.7,700.6 1081.6,704.5 C1071.6,708.4 1062.3,710.6 1053.7,715.7 C1045.1,720.9 1038.7,730.3 1030.0,735.3 C1021.3,740.3 1007.6,739.2 1001.6,745.8 C995.7,752.3 996.0,764.9 994.2,774.6 C992.4,784.4 993.2,797.1 991.0,804.3 C988.8,811.4 982.6,815.3 981.0,817.5"/><path d="M1153.6,486.1 C1147.7,490.0 1130.3,502.8 1117.7,509.5 C1105.2,516.2 1090.7,518.7 1078.3,526.3 C1066.0,533.9 1054.3,544.3 1043.7,555.0 C1033.1,565.6 1025.7,579.8 1014.7,590.0 C1003.7,600.2 990.8,611.1 977.6,616.1 C964.5,621.0 947.6,616.1 935.6,619.5 C923.7,622.9 916.3,632.1 905.9,636.5 C895.4,640.9 883.9,644.5 873.0,646.0 C862.0,647.4 851.0,644.5 840.1,645.2 C829.2,645.9 815.8,652.2 807.6,650.2 C799.4,648.2 793.7,636.0 791.0,633.2"/><path d="M1153.6,486.1 C1148.0,484.8 1130.7,481.4 1119.6,477.9 C1108.5,474.4 1097.9,469.1 1087.0,465.1 C1076.1,461.0 1064.7,458.2 1054.0,453.6 C1043.4,449.0 1028.2,440.4 1023.0,437.8"/><path d="M1153.6,486.1 C1151.8,482.0 1147.0,469.0 1142.3,461.2 C1137.7,453.4 1131.3,448.6 1125.6,439.5 C1120.0,430.4 1115.1,417.0 1108.4,406.7 C1101.8,396.3 1089.4,382.3 1085.6,377.4"/><path d="M1153.6,486.1 C1148.9,481.8 1133.1,470.2 1125.1,460.1 C1117.1,450.1 1113.9,435.4 1105.5,425.7 C1097.2,415.9 1084.1,410.6 1074.8,401.7 C1065.6,392.8 1058.7,381.7 1049.9,372.4 C1041.0,363.1 1031.7,354.2 1021.6,346.1 C1011.5,337.9 999.4,331.7 989.2,323.5 C979.0,315.2 970.1,305.1 960.3,296.5 C950.5,288.0 941.2,279.2 930.5,272.3 C919.8,265.3 906.5,260.6 896.3,254.7 C886.1,248.9 878.4,242.5 869.1,237.0 C859.7,231.5 845.1,224.4 840.3,221.8"/><path d="M1153.6,486.1 C1151.4,490.0 1143.8,501.2 1140.2,509.4 C1136.7,517.5 1133.7,524.4 1132.3,535.0 C1130.9,545.5 1130.8,560.3 1131.8,572.8 C1132.8,585.3 1137.2,603.8 1138.3,610.1"/><path d="M1545.0,400.6 C1540.0,402.8 1525.1,410.0 1514.9,414.0 C1504.7,418.0 1493.4,417.0 1483.7,424.5 C1473.9,432.0 1465.4,447.3 1456.5,458.8 C1447.5,470.4 1439.7,482.9 1429.9,493.7 C1420.1,504.5 1404.6,514.7 1397.7,523.7 C1390.7,532.6 1392.0,539.7 1388.2,547.2 C1384.5,554.7 1376.7,559.8 1375.0,568.7 C1373.2,577.7 1378.1,590.4 1377.8,601.1 C1377.4,611.8 1374.4,622.3 1372.8,632.9 C1371.3,643.5 1372.8,657.0 1368.3,664.7 C1363.9,672.5 1353.5,674.4 1346.3,679.4 C1339.1,684.5 1331.4,690.0 1325.0,695.2 C1318.5,700.5 1313.9,706.5 1307.6,711.0 C1301.3,715.5 1294.9,714.8 1287.0,722.3 C1279.1,729.7 1268.6,744.3 1260.2,755.9 C1251.7,767.5 1246.2,784.9 1236.3,791.8 C1226.5,798.6 1212.9,795.6 1201.1,796.9 C1189.4,798.1 1176.6,798.4 1165.6,799.3 C1154.7,800.1 1145.7,801.5 1135.7,801.9 C1125.7,802.3 1116.7,798.1 1105.6,801.8 C1094.6,805.4 1080.9,815.4 1069.4,823.6 C1058.0,831.7 1047.1,848.9 1037.0,850.7 C1026.9,852.4 1018.2,839.7 1008.9,834.2 C999.6,828.7 985.6,820.3 981.0,817.5"/><path d="M791.0,633.2 C793.3,629.3 800.0,617.6 805.0,610.2 C810.0,602.8 819.6,599.4 821.0,588.6 C822.3,577.8 812.2,556.0 813.0,545.4 C813.7,534.8 821.3,531.7 825.5,524.9 C829.8,518.1 838.6,514.2 838.3,504.5 C838.0,494.8 825.7,476.8 823.6,466.8 C821.6,456.8 825.6,451.9 826.1,444.4 C826.5,436.9 824.1,431.5 826.3,421.8 C828.4,412.2 839.1,397.2 839.0,386.3 C838.9,375.4 829.0,366.8 825.7,356.5 C822.3,346.2 819.2,332.7 819.0,324.5 C818.7,316.3 822.3,317.0 824.3,307.4 C826.3,297.7 828.6,277.0 831.0,266.6 C833.3,256.1 836.6,252.2 838.2,244.7 C839.7,237.3 838.1,227.3 840.3,221.8 C842.5,216.3 849.7,213.4 851.6,211.7"/><path d="M1001.6,745.8 C999.2,738.8 989.2,718.3 987.1,703.8 C985.0,689.2 990.6,673.3 989.1,658.7 C987.5,644.0 979.4,627.2 977.6,616.1 C975.9,604.9 979.0,599.9 978.6,591.9 C978.3,583.9 975.0,576.0 975.6,567.9 C976.2,559.7 979.1,550.9 982.2,543.0 C985.3,535.0 989.4,530.7 994.3,520.2 C999.2,509.7 1006.7,493.7 1011.5,480.0 C1016.3,466.2 1021.7,448.7 1023.0,437.8 C1024.3,426.8 1020.2,422.2 1019.2,414.4 C1018.2,406.5 1016.6,402.2 1017.0,390.8 C1017.4,379.4 1020.2,358.0 1021.6,346.1 C1023.1,334.1 1024.6,328.1 1025.8,319.1 C1027.0,310.1 1030.7,302.1 1029.0,292.0 C1027.3,281.9 1018.7,270.0 1015.6,258.5 C1012.4,246.9 1009.1,231.5 1010.3,222.7 C1011.5,214.0 1020.9,209.0 1023.0,206.2"/><path d="M1205.0,231.9 C1207.9,238.1 1217.0,257.3 1222.3,269.3 C1227.7,281.3 1229.5,295.5 1237.0,303.8 C1244.5,312.1 1257.9,313.0 1267.3,319.2 C1276.8,325.3 1285.0,334.4 1293.7,340.7 C1302.3,347.0 1311.1,351.1 1319.1,357.2 C1327.1,363.3 1339.8,367.7 1341.7,377.4 C1343.5,387.1 1331.2,402.2 1330.2,415.1 C1329.2,428.1 1336.3,442.1 1335.6,455.1 C1335.0,468.1 1324.2,480.2 1326.3,493.1 C1328.4,506.0 1340.2,519.8 1348.3,532.4 C1356.4,545.0 1370.5,562.7 1375.0,568.7"/><path d="M1001.6,745.8 C1006.6,748.3 1021.4,756.7 1031.6,761.0 C1041.8,765.3 1052.3,768.8 1063.1,771.5 C1073.9,774.1 1085.5,777.2 1096.3,776.8 C1107.1,776.3 1117.4,771.1 1128.1,768.9 C1138.7,766.7 1149.8,766.0 1160.3,763.4 C1170.8,760.8 1180.6,757.0 1191.0,753.3 C1201.3,749.7 1211.8,744.7 1222.4,741.3 C1233.1,737.9 1244.3,736.1 1255.1,732.9 C1265.8,729.7 1278.4,726.1 1287.0,722.3 C1295.6,718.4 1300.5,714.5 1306.9,710.0 C1313.2,705.5 1322.0,697.7 1325.0,695.2"/><path d="M1302.3,210.8 C1308.6,211.7 1327.6,213.2 1339.8,216.1 C1352.0,219.0 1364.8,225.1 1375.7,228.2 C1386.5,231.3 1394.9,235.0 1405.0,234.6 C1415.1,234.3 1426.1,229.3 1436.5,226.1 C1446.8,222.8 1457.1,219.5 1467.1,215.3 C1477.1,211.0 1486.7,199.7 1496.3,200.7 C1506.0,201.7 1515.0,215.2 1525.1,221.2 C1535.2,227.2 1544.5,233.5 1557.0,236.5 C1569.5,239.5 1594.2,231.5 1600.3,239.2 C1606.4,247.0 1594.6,270.2 1593.7,282.9 C1592.7,295.7 1595.5,304.9 1594.6,315.7 C1593.7,326.5 1593.5,338.5 1588.3,347.9 C1583.2,357.2 1571.1,363.1 1563.8,371.9 C1556.6,380.7 1548.1,395.8 1545.0,400.6"/><path d="M1600.3,239.2 C1602.8,236.8 1609.1,229.4 1615.0,224.6 C1620.9,219.7 1628.5,214.1 1635.8,210.0 C1643.1,205.9 1649.8,205.0 1659.0,199.8 C1668.2,194.5 1680.7,183.8 1691.0,178.5 C1701.3,173.3 1712.3,167.0 1721.0,168.4 C1729.7,169.8 1736.0,180.5 1743.1,186.9 C1750.2,193.4 1761.1,200.2 1763.7,207.1 C1766.2,214.0 1753.0,222.0 1758.3,228.2 C1763.7,234.5 1784.9,244.2 1795.7,244.7 C1806.5,245.2 1814.1,236.0 1823.1,231.2 C1832.1,226.5 1842.2,220.6 1849.7,216.3 C1857.1,212.0 1861.8,209.4 1867.7,205.3 C1873.6,201.2 1882.1,193.8 1885.0,191.5"/><path d="M1496.3,200.7 C1495.3,194.2 1495.2,170.2 1490.3,161.9 C1485.4,153.6 1474.9,153.9 1466.8,151.1 C1458.7,148.3 1450.5,148.5 1441.7,145.2 C1432.9,141.8 1422.6,137.0 1414.1,131.1 C1405.6,125.3 1399.4,115.4 1390.7,110.0 C1382.0,104.5 1366.5,100.4 1361.7,98.5"/><path d="M1302.3,210.8 C1307.7,207.8 1324.1,198.9 1334.9,192.7 C1345.6,186.6 1362.4,183.3 1367.0,173.9 C1371.6,164.5 1363.5,148.9 1362.6,136.3 C1361.7,123.7 1361.8,104.8 1361.7,98.5"/><path d="M1496.3,200.7 C1500.2,198.0 1511.4,189.5 1519.3,184.4 C1527.2,179.3 1537.5,176.0 1543.7,170.2 C1549.8,164.4 1551.5,156.1 1556.2,149.6 C1560.8,143.1 1563.4,130.4 1571.7,131.2 C1579.9,132.0 1598.6,144.8 1605.7,154.5 C1612.7,164.1 1612.3,177.4 1613.9,189.0 C1615.4,200.7 1614.8,218.7 1615.0,224.6"/><path d="M1490.3,161.9 C1490.7,156.5 1491.0,140.3 1492.7,129.8 C1494.3,119.2 1499.1,103.7 1500.3,98.5"/><path d="M1721.0,168.4 C1721.7,162.6 1724.4,145.2 1725.3,133.5 C1726.2,121.9 1726.2,104.3 1726.3,98.5"/><path d="M1763.7,207.1 C1768.6,203.3 1784.3,193.0 1793.1,184.4 C1801.9,175.8 1813.7,163.8 1816.3,155.4 C1819.0,147.0 1811.0,141.2 1809.2,133.9 C1807.5,126.6 1806.3,115.3 1805.7,111.6"/><path d="M1885.0,191.5 C1886.0,186.0 1887.8,169.1 1890.9,158.5 C1894.0,147.8 1901.6,132.6 1903.7,127.5"/><path d="M1358.3,886.1 C1362.5,884.9 1375.4,882.6 1383.4,879.4 C1391.4,876.2 1397.3,866.6 1406.3,867.1 C1415.4,867.7 1428.1,883.1 1437.7,882.8 C1447.2,882.5 1454.9,871.2 1463.5,865.3 C1472.0,859.4 1479.2,851.9 1489.0,847.4 C1498.8,842.8 1511.1,841.2 1522.1,837.9 C1533.0,834.7 1543.7,830.2 1554.9,827.6 C1566.0,825.1 1580.8,827.3 1589.0,822.5 C1597.2,817.8 1596.3,802.7 1604.3,799.3 C1612.4,795.8 1626.3,801.1 1637.3,801.7 C1648.3,802.2 1659.1,802.3 1670.3,802.6 C1681.6,802.9 1693.4,804.2 1704.8,803.6 C1716.2,803.1 1731.4,796.1 1739.0,799.3 C1746.6,802.4 1746.6,814.6 1750.3,822.4 C1753.9,830.1 1752.6,843.1 1761.0,845.7 C1769.4,848.3 1787.5,840.3 1800.9,837.9 C1814.2,835.6 1829.8,833.9 1841.0,831.6 C1852.2,829.4 1858.8,826.0 1867.9,824.6 C1877.0,823.2 1887.3,829.7 1895.7,823.4 C1904.1,817.1 1914.6,792.9 1918.4,786.8"/><path d="M1604.3,799.3 C1608.7,802.4 1621.4,812.6 1630.8,817.8 C1640.1,823.1 1650.4,827.1 1660.3,830.8 C1670.3,834.5 1680.8,835.9 1690.4,840.0 C1700.0,844.1 1705.9,854.7 1717.7,855.6 C1729.4,856.6 1753.8,847.3 1761.0,845.7"/><path d="M1841.0,831.6 C1842.7,828.0 1847.6,817.2 1851.0,810.0 C1854.3,802.8 1859.3,792.0 1861.0,788.4"/><path d="M1841.0,831.6 C1838.1,836.9 1828.6,852.4 1823.7,863.4 C1818.8,874.4 1813.7,891.8 1811.7,897.5"/><path d="M1358.3,886.1 L1358.3,922.9"/><path d="M1358.3,886.1 C1355.7,889.0 1348.4,898.5 1342.8,903.9 C1337.1,909.4 1327.4,916.3 1324.3,918.8"/><path d="M1437.7,882.8 C1441.7,885.5 1453.7,894.3 1462.2,899.3 C1470.6,904.4 1484.0,910.8 1488.3,913.1"/><path d="M1589.0,822.5 L1583.7,839.9"/><path d="M1717.7,855.6 L1703.0,886.1"/><path d="M1895.7,823.4 C1901.5,825.7 1924.3,830.3 1930.4,837.4 C1936.5,844.6 1930.6,856.9 1932.3,866.4 C1934.0,875.9 1939.0,889.6 1940.4,894.3"/><path d="M1010.3,222.7 C1016.0,222.7 1033.2,222.4 1044.6,222.3 C1056.0,222.2 1067.6,224.2 1078.9,222.2 C1090.2,220.2 1101.1,211.8 1112.4,210.4 C1123.8,208.9 1136.4,211.6 1147.0,213.6 C1157.6,215.5 1166.5,219.2 1176.1,222.3 C1185.8,225.3 1194.9,231.2 1205.0,231.9 C1215.0,232.6 1225.9,227.4 1236.4,226.5 C1247.0,225.6 1263.0,226.4 1268.3,226.4"/><path d="M1153.6,315.5 C1148.8,317.6 1134.0,323.1 1124.8,328.1 C1115.5,333.0 1104.8,337.0 1098.3,345.2 C1091.8,353.4 1093.4,370.6 1085.6,377.4 C1077.9,384.2 1063.1,383.6 1051.6,385.8 C1040.2,388.0 1022.8,389.9 1017.0,390.8"/><path d="M1029.0,292.0 C1034.8,296.4 1052.4,309.3 1063.9,318.2 C1075.5,327.1 1092.6,340.7 1098.3,345.2"/><path d="M1029.0,292.0 C1035.7,294.5 1055.5,303.3 1069.2,306.7 C1082.9,310.1 1097.1,311.1 1111.2,312.5 C1125.2,314.0 1146.6,315.0 1153.6,315.5"/><path d="M1153.6,315.5 C1160.7,315.3 1182.1,316.4 1196.0,314.4 C1209.9,312.4 1225.7,308.2 1237.0,303.8 C1248.3,299.3 1254.8,292.9 1263.8,287.6 C1272.8,282.3 1288.4,278.4 1291.0,272.0 C1293.6,265.7 1283.4,256.9 1279.6,249.3 C1275.8,241.7 1270.2,230.2 1268.3,226.4"/><path d="M1291.0,272.0 C1295.3,275.8 1307.5,288.0 1316.6,294.8 C1325.8,301.6 1336.4,306.4 1345.8,312.8 C1355.2,319.3 1362.5,326.5 1373.0,333.5 C1383.4,340.6 1397.0,347.3 1408.5,355.1 C1419.9,362.8 1436.1,375.9 1441.7,380.1"/><path d="M1341.7,377.4 C1344.2,373.7 1351.6,362.4 1356.8,355.1 C1362.0,347.8 1370.3,337.1 1373.0,333.5"/><path d="M1235.7,367.6 C1240.5,370.2 1255.6,377.4 1264.9,383.5 C1274.1,389.6 1286.6,400.7 1291.0,404.1"/><path d="M1235.7,367.6 C1228.9,368.5 1208.7,371.5 1195.1,372.8 C1181.5,374.1 1166.9,375.7 1154.3,375.6 C1141.8,375.6 1131.3,372.2 1119.9,372.5 C1108.4,372.8 1091.3,376.6 1085.6,377.4"/><path d="M1235.7,367.6 C1236.3,362.3 1239.6,346.4 1239.8,335.7 C1240.1,325.1 1237.5,309.1 1237.0,303.8"/><path d="M1085.6,377.4 C1080.3,382.3 1063.8,396.6 1053.4,406.6 C1042.9,416.7 1028.0,432.6 1023.0,437.8"/><path d="M876.3,315.5 C883.3,313.9 904.3,309.2 918.3,306.0 C932.3,302.8 953.3,298.1 960.3,296.5"/><path d="M819.0,324.5 C823.7,323.6 837.9,320.4 847.5,318.9 C857.0,317.4 865.2,315.7 876.3,315.5 C887.4,315.3 901.6,315.5 913.8,317.5 C926.0,319.6 937.8,323.5 949.6,327.7 C961.4,331.8 972.5,339.2 984.5,342.3 C996.5,345.4 1015.4,345.5 1021.6,346.1"/><path d="M826.3,421.8 C831.2,421.2 846.2,420.0 855.9,417.8 C865.6,415.5 874.2,414.1 884.3,408.5 C894.4,403.0 905.3,392.3 916.2,384.7 C927.1,377.2 938.6,364.0 949.6,363.1 C960.7,362.2 971.1,374.6 982.4,379.3 C993.6,383.9 1011.2,388.9 1017.0,390.8"/><path d="M884.3,408.5 C887.3,402.0 901.2,380.5 902.3,369.4 C903.4,358.2 895.4,350.6 891.1,341.6 C886.7,332.6 878.8,319.8 876.3,315.5"/><path d="M823.6,466.8 C827.7,466.9 840.1,467.4 848.3,467.1 C856.6,466.8 861.8,463.7 873.0,465.1 C884.2,466.5 902.4,475.6 915.6,475.6 C928.8,475.6 940.0,468.8 952.2,465.1 C964.3,461.5 976.6,458.3 988.4,453.7 C1000.2,449.2 1017.2,440.4 1023.0,437.8"/><path d="M838.3,504.5 C841.1,501.1 849.2,490.8 855.0,484.2 C860.8,477.6 870.0,468.3 873.0,465.1"/><path d="M915.6,475.6 C914.2,480.8 909.2,496.2 906.8,506.7 C904.3,517.1 906.2,530.0 901.0,538.4 C895.8,546.9 884.5,551.7 875.6,557.3 C866.7,562.8 856.8,566.8 847.7,572.0 C838.6,577.2 825.4,585.8 821.0,588.6"/><path d="M901.0,538.4 C907.0,541.3 924.9,550.7 937.3,555.6 C949.8,560.5 969.3,565.8 975.6,567.9"/><path d="M791.0,633.2 C793.7,636.0 804.9,643.4 807.6,650.2 C810.3,657.1 807.0,666.1 807.2,674.0 C807.4,682.0 806.6,688.2 809.0,697.8 C811.4,707.4 818.0,720.2 821.7,731.7 C825.3,743.2 822.6,759.2 831.0,766.7 C839.3,774.2 859.2,776.2 871.6,776.8 C884.0,777.3 894.5,773.6 905.4,770.2 C916.3,766.9 926.3,759.7 937.0,756.7 C947.7,753.7 958.7,754.2 969.5,752.4 C980.3,750.6 996.3,746.9 1001.6,745.8"/><path d="M873.0,646.0 C873.2,649.9 873.6,661.6 874.2,669.4 C874.7,677.2 875.5,681.8 876.3,692.7 C877.1,703.6 879.7,721.0 878.9,735.0 C878.1,749.0 872.8,769.8 871.6,776.8"/><path d="M935.6,619.5 C939.0,615.2 949.3,602.5 955.9,593.9 C962.6,585.3 972.4,572.2 975.6,567.9"/><path d="M1081.6,704.5 C1083.2,710.5 1088.7,728.2 1091.1,740.2 C1093.6,752.2 1093.9,766.5 1096.3,776.8 C1098.7,787.0 1104.1,797.6 1105.6,801.8"/><path d="M1148.3,686.8 C1148.2,691.3 1146.9,705.1 1147.6,713.8 C1148.4,722.5 1150.8,730.6 1153.0,738.9 C1155.1,747.1 1158.2,753.3 1160.3,763.4 C1162.4,773.5 1164.8,793.3 1165.6,799.3"/><path d="M1148.3,686.8 C1152.9,687.9 1165.6,697.1 1175.6,693.5 C1185.7,690.0 1197.2,674.0 1208.9,665.3 C1220.5,656.6 1234.4,650.5 1245.6,641.3 C1256.8,632.1 1271.2,615.3 1276.3,610.1"/><path d="M1276.3,610.1 C1278.8,614.9 1286.1,629.6 1291.0,639.3 C1295.9,649.1 1300.1,659.3 1305.7,668.6 C1311.4,677.9 1320.2,685.5 1325.0,695.2 C1329.8,705.0 1332.8,722.0 1334.3,727.3"/><path d="M1276.3,610.1 C1281.7,607.5 1297.4,598.8 1308.5,594.5 C1319.5,590.2 1331.7,588.5 1342.8,584.2 C1353.9,579.9 1369.6,571.3 1375.0,568.7"/><path d="M1276.3,610.1 C1281.2,613.5 1295.6,624.2 1305.4,630.9 C1315.3,637.6 1325.0,644.5 1335.5,650.1 C1346.0,655.8 1362.9,662.3 1368.3,664.7"/><path d="M1175.6,609.2 C1181.2,608.9 1198.0,606.9 1209.2,607.7 C1220.4,608.5 1231.5,613.5 1242.7,613.9 C1253.9,614.3 1270.7,610.7 1276.3,610.1"/><path d="M1138.3,610.1 L1175.6,609.2"/><path d="M1138.3,610.1 C1134.5,614.9 1121.9,628.8 1115.2,639.0 C1108.6,649.3 1104.0,660.8 1098.4,671.8 C1092.8,682.7 1084.4,699.1 1081.6,704.5"/><path d="M1132.3,535.0 C1127.9,533.7 1114.8,529.0 1105.8,527.5 C1096.8,526.1 1082.9,526.5 1078.3,526.3"/><path d="M1258.3,516.7 C1264.2,515.4 1282.3,512.6 1293.6,508.6 C1304.9,504.7 1320.9,495.7 1326.3,493.1"/><path d="M1326.3,493.1 C1332.3,495.7 1350.0,503.5 1361.9,508.6 C1373.8,513.6 1391.7,521.1 1397.7,523.7"/><path d="M1013.6,880.3 L1042.3,896.7"/><path d="M1013.6,880.3 L1000.3,922.9"/><path d="M1588.3,347.9 C1588.8,342.5 1590.3,326.3 1591.2,315.4 C1592.1,304.6 1593.3,288.4 1593.7,282.9"/><path d="M1441.7,380.1 C1445.5,383.5 1457.4,393.2 1464.4,400.6 C1471.4,408.0 1480.5,420.5 1483.7,424.5"/><path d="M1507.7,259.3 C1507.1,254.3 1506.3,239.3 1504.4,229.5 C1502.5,219.8 1497.7,205.5 1496.3,200.7"/><path d="M1439.7,196.1 C1444.3,197.0 1458.3,200.6 1467.8,201.4 C1477.2,202.1 1491.6,200.8 1496.3,200.7"/><path d="M1439.7,196.1 C1439.8,191.8 1440.2,179.1 1440.5,170.6 C1440.9,162.1 1441.5,149.4 1441.7,145.2"/><path d="M1405.0,234.6 C1408.0,231.6 1417.4,222.6 1423.2,216.2 C1429.0,209.7 1436.9,199.4 1439.7,196.1"/><path d="M1577.0,560.1 C1579.9,557.9 1589.1,551.2 1594.3,547.1 C1599.6,543.1 1606.0,537.7 1608.3,535.8"/><path d="M1577.0,560.1 L1614.3,560.1"/></g>
<g fill="none" stroke="#505b6c" stroke-width="1.7" stroke-linejoin="round" stroke-opacity="0.92"><polyline points="808.1,359.1 812.6,355.5 814.8,349.8 818.8,345.6 823.3,342.0 827.3,338.8 832.5,338.1 837.0,336.0 843.4,333.2 850.3,332.0 854.0,335.7 857.0,340.0 858.5,345.3 860.0,350.5 857.2,353.5 855.0,357.0 860.3,359.6 866.0,360.9 870.5,358.7 875.0,356.7 879.3,354.2 884.8,354.6 889.5,357.2 894.2,359.7 899.4,360.9 904.7,359.8 910.1,358.8 915.0,356.4 918.9,352.5 923.7,350.2 928.4,347.5 934.3,346.3 940.3,346.8 946.2,347.5 951.2,349.4 956.4,350.2 961.8,349.7 964.0,355.5 965.3,361.4 964.9,367.6 970.8,370.0 974.8,375.5 981.3,377.1 986.3,380.9 984.8,385.7 981.5,389.7 979.6,394.3 975.1,399.5 968.2,402.0 964.0,407.7 959.3,411.9 955.1,416.6 950.7,421.1 947.4,425.7 944.3,430.6 939.7,434.2 941.0,439.7 942.4,445.1 944.5,450.4 946.3,456.8 944.5,463.5 944.6,470.0 946.2,476.4 945.9,482.3 943.1,487.6 941.1,493.0 941.3,499.0 936.4,501.2 933.2,505.6 933.1,511.1 933.4,516.5 934.8,521.8 937.8,527.9 938.0,534.8 936.5,541.3 934.8,547.8 928.3,549.4 921.5,548.1 915.0,550.0 909.0,549.5 903.3,551.6 897.5,552.7 900.2,558.4 905.9,561.8 908.8,567.3 912.4,573.3 913.7,580.1 915.3,586.8 919.3,592.5 925.0,596.5 930.0,599.6 934.8,603.0 933.1,608.3 934.2,614.1 931.6,619.2 927.9,623.3 923.8,626.9 919.2,629.9 917.5,636.4 914.3,642.3 913.5,648.6 911.8,654.8 914.4,660.2 918.8,664.5 921.7,669.7 926.5,673.2 929.2,678.4 933.4,676.2 937.9,674.7 937.6,679.9 934.7,684.5 934.2,689.6 928.9,690.8 924.2,693.4 920.2,693.9 916.7,695.8 913.7,699.9 913.7,705.0 911.8,709.5 909.2,715.4 904.3,719.5 900.9,724.3 898.1,729.4 901.0,735.3 901.8,741.9 902.4,748.2 904.3,754.3 906.8,758.3 906.8,763.0"/><polyline points="1280.3,220.4 1284.3,224.0 1289.8,225.3 1293.6,229.3 1298.8,232.7 1304.8,233.8 1306.9,238.1 1306.7,243.1 1309.3,247.2 1314.2,249.7 1319.8,249.8 1324.9,251.6 1330.7,253.4 1335.6,257.1 1341.8,257.7 1347.2,260.5 1352.7,263.7 1356.7,269.2 1362.8,271.7 1369.1,271.8 1374.8,275.2 1380.9,276.3 1387.3,276.1 1393.6,279.1 1400.5,279.9 1407.4,280.8 1414.0,282.8 1419.8,282.2 1425.5,280.6 1431.5,282.5 1437.2,281.7 1443.0,280.6 1444.7,276.3 1445.3,271.7 1450.8,272.8 1456.3,274.0 1462.2,271.9 1467.6,273.9 1473.2,276.1 1479.1,277.4 1484.3,280.8 1489.9,282.8 1491.6,287.8 1494.2,292.5 1494.9,297.9 1496.5,302.9 1501.8,303.4 1506.9,304.7 1512.2,305.1 1518.9,304.8 1525.7,305.2 1532.2,302.9 1534.8,307.0 1538.9,309.6 1544.8,310.3 1550.9,310.4 1556.7,311.8 1563.2,314.2 1570.1,314.0 1574.2,311.2 1578.4,308.3 1583.5,307.4 1590.0,305.0 1596.9,305.1 1603.7,304.3 1610.3,306.0"/><polyline points="1496.5,302.9 1498.6,299.6 1500.0,296.0 1505.2,295.9 1510.0,294.0 1513.5,295.3 1516.0,298.0 1514.8,301.9 1512.2,305.1"/><polyline points="1863.3,99.0 1861.6,104.4 1857.7,109.0 1857.1,114.9 1858.6,120.8 1859.2,126.9 1862.1,132.4 1866.4,135.5 1870.0,139.5 1874.5,142.3 1879.2,145.7 1885.2,146.9 1889.5,151.0 1894.7,151.6 1899.5,149.6 1904.4,148.5 1908.4,149.2 1911.9,147.3 1912.3,152.3 1913.1,157.3 1907.6,161.2 1904.4,167.2 1902.3,173.4 1900.7,179.7"/><polyline points="1975.4,783.0 1976.7,787.5 1977.3,792.2 1973.2,794.6 1969.1,797.3 1964.2,797.8 1963.3,804.6 1960.5,810.8 1954.5,812.4 1948.9,814.7 1943.8,818.3 1949.3,819.8 1953.1,824.4 1958.7,825.7 1958.2,831.4 1956.9,836.9 1956.8,842.6 1954.9,848.0 1952.2,853.3 1953.2,859.5 1950.9,864.8 1949.4,870.4 1950.5,877.2 1952.9,883.4 1956.8,889.0 1956.1,895.0 1958.6,901.0 1958.3,907.0 1956.2,913.0 1955.9,919.0 1957.5,925.0"/></g>
</g>
<g fill="#d9edfb" fill-opacity="0.95" stroke="#d9edfb" stroke-opacity="0.6" stroke-width="0.4" font-style="italic"><text x="1668" y="256" font-size="15" letter-spacing="0.3" transform="rotate(0 1668 256)" text-anchor="middle">Golfe du</text><text x="1668" y="276" font-size="15" letter-spacing="0.3" transform="rotate(0 1668 276)" text-anchor="middle">Lion</text><path id="sp12" d="M1481,538.5 Q1530.8,492.6 1580,467.5" fill="none" stroke="none"/><text font-size="17.5" letter-spacing="1.7"><textPath href="#sp12" startOffset="0">Balearic Sea</textPath></text><path id="sp17" d="M1633,727.5 Q1751.9,646.8 1818,562" fill="none" stroke="none"/><text font-size="22" letter-spacing="3.45"><textPath href="#sp17" startOffset="0">Mediterranean Sea</textPath></text><text x="1165" y="854" font-size="19" letter-spacing="1.6" transform="rotate(0 1165 854)" text-anchor="middle">Alboran</text><text x="1165" y="880" font-size="19" letter-spacing="1.6" transform="rotate(0 1165 880)" text-anchor="middle">Sea</text></g>
<g filter="url(#halo)"><text x="750" y="241.5" font-size="16" font-weight="bold" fill="#3b3b3b" text-anchor="start" textLength="64" lengthAdjust="spacingAndGlyphs">Carballo</text><circle cx="822" cy="236" r="2.3" fill="#f3efe6" stroke="#4f4f4f" stroke-width="1.2"/><text x="940" y="219.5" font-size="16" font-weight="bold" fill="#3b3b3b" text-anchor="start" textLength="63" lengthAdjust="spacingAndGlyphs">Oviedo /</text><text x="960.7" y="236" font-size="16" font-weight="bold" fill="#3b3b3b" text-anchor="start" textLength="42.5" lengthAdjust="spacingAndGlyphs">Uviéu</text><text x="1145.8" y="237.7" font-size="16.5" font-weight="bold" fill="#3b3b3b" text-anchor="start" textLength="52" lengthAdjust="spacingAndGlyphs">Bilbao</text><circle cx="1203" cy="230.7" r="2.3" fill="#f3efe6" stroke="#4f4f4f" stroke-width="1.2"/><text x="1419.8" y="206" font-size="16" font-weight="bold" fill="#3b3b3b" text-anchor="start" textLength="70" lengthAdjust="spacingAndGlyphs">Toulouse</text><circle cx="1495.7" cy="199.5" r="2.3" fill="#f3efe6" stroke="#4f4f4f" stroke-width="1.2"/><text x="1867.6" y="191.4" font-size="14" font-weight="bold" fill="#3b3b3b" text-anchor="start" textLength="51.7" lengthAdjust="spacingAndGlyphs">Monaco</text><text x="1507.7" y="289" font-size="16" font-weight="bold" fill="#3b3b3b" text-anchor="start" textLength="78" lengthAdjust="spacingAndGlyphs">Perpignan</text><circle cx="1591.5" cy="282.8" r="2.3" fill="#f3efe6" stroke="#4f4f4f" stroke-width="1.2"/><text x="1478.7" y="300.7" font-size="13" font-weight="bold" fill="#3b3b3b" text-anchor="start" textLength="53.5" lengthAdjust="spacingAndGlyphs">Andorra</text><text x="1530" y="353" font-size="16" font-weight="bold" fill="#3b3b3b" text-anchor="start" textLength="51.3" lengthAdjust="spacingAndGlyphs">Girona</text><circle cx="1587" cy="346.6" r="2.3" fill="#f3efe6" stroke="#4f4f4f" stroke-width="1.2"/><text x="1552.3" y="408.3" font-size="18.6" font-family="'DejaVu Sans', sans-serif" stroke="#1a1a1a" stroke-width="0.85" stroke-linejoin="round" fill="#1a1a1a" text-anchor="start" textLength="97.2" lengthAdjust="spacingAndGlyphs">Barcelona</text><circle cx="1544.3" cy="401.4" r="2.3" fill="#f3efe6" stroke="#4f4f4f" stroke-width="1.2"/><text x="1909.9" y="464.8" font-size="16" font-weight="bold" fill="#3b3b3b" text-anchor="start" textLength="53.5" lengthAdjust="spacingAndGlyphs">Sassari</text><circle cx="1970.6" cy="458.5" r="2.3" fill="#f3efe6" stroke="#4f4f4f" stroke-width="1.2"/><text x="775.9" y="330.5" font-size="17" font-weight="bold" fill="#3b3b3b" text-anchor="start" textLength="35.6" lengthAdjust="spacingAndGlyphs">Vigo</text><circle cx="818.2" cy="323" r="2.3" fill="#f3efe6" stroke="#4f4f4f" stroke-width="1.2"/><text x="1002" y="383" font-size="16" font-weight="bold" fill="#3b3b3b" text-anchor="start" textLength="77" lengthAdjust="spacingAndGlyphs">Valladolid</text><circle cx="1084.9" cy="376.5" r="2.3" fill="#f3efe6" stroke="#4f4f4f" stroke-width="1.2"/><text x="1079" y="420" font-size="28" font-weight="bold" fill="#3b3b3b" text-anchor="start" textLength="101.3" lengthAdjust="spacingAndGlyphs">España</text><text x="777.6" y="427.5" font-size="16" font-weight="bold" fill="#3b3b3b" text-anchor="start" textLength="41.5" lengthAdjust="spacingAndGlyphs">Porto</text><circle cx="825.8" cy="421" r="2.3" fill="#f3efe6" stroke="#4f4f4f" stroke-width="1.2"/><text x="1162" y="508.4" font-size="18" font-family="'DejaVu Sans', sans-serif" stroke="#1a1a1a" stroke-width="0.85" stroke-linejoin="round" fill="#1a1a1a" text-anchor="start" textLength="67" lengthAdjust="spacingAndGlyphs">Madrid</text><text x="776.7" y="566.4" font-size="25" font-weight="bold" fill="#3b3b3b" text-anchor="start" textLength="104.8" lengthAdjust="spacingAndGlyphs">Portugal</text><text x="721.9" y="641.2" font-size="18.4" font-family="'DejaVu Sans', sans-serif" stroke="#1a1a1a" stroke-width="0.85" stroke-linejoin="round" fill="#1a1a1a" text-anchor="start" textLength="63" lengthAdjust="spacingAndGlyphs">Lisboa</text><circle cx="790.1" cy="633.7" r="2.3" fill="#f3efe6" stroke="#4f4f4f" stroke-width="1.2"/><text x="1003.3" y="711" font-size="17" font-weight="bold" fill="#3b3b3b" text-anchor="start" textLength="72.2" lengthAdjust="spacingAndGlyphs">Córdoba</text><circle cx="1082.2" cy="702.9" r="2.3" fill="#f3efe6" stroke="#4f4f4f" stroke-width="1.2"/><text x="940.4" y="751.5" font-size="17" font-weight="bold" fill="#3b3b3b" text-anchor="start" textLength="53.5" lengthAdjust="spacingAndGlyphs">Sevilla</text><circle cx="1000.5" cy="743.5" r="2.3" fill="#f3efe6" stroke="#4f4f4f" stroke-width="1.2"/><text x="753.1" y="772" font-size="15.5" font-weight="bold" fill="#3b3b3b" text-anchor="start" textLength="70.5" lengthAdjust="spacingAndGlyphs">Portimão</text><circle cx="830.3" cy="766.2" r="2.3" fill="#f3efe6" stroke="#4f4f4f" stroke-width="1.2"/><text x="1014" y="854.5" font-size="14" font-weight="bold" fill="#3b3b3b" text-anchor="start" textLength="59.3" lengthAdjust="spacingAndGlyphs">Gibraltar</text><text x="1298" y="574.4" font-size="16.5" font-family="'DejaVu Sans', sans-serif" stroke="#1a1a1a" stroke-width="0.85" stroke-linejoin="round" fill="#1a1a1a" text-anchor="start" textLength="70.6" lengthAdjust="spacingAndGlyphs">València</text><text x="1610.3" y="803.6" font-size="18.2" font-family="'DejaVu Sans', sans-serif" stroke="#1a1a1a" stroke-width="0.85" stroke-linejoin="round" fill="#1a1a1a" text-anchor="start" textLength="49.2" lengthAdjust="spacingAndGlyphs">Alger</text><circle cx="1603.3" cy="796.5" r="2.3" fill="#f3efe6" stroke="#4f4f4f" stroke-width="1.2"/><text x="1846.6" y="836.4" font-size="16.9" font-family="'DejaVu Sans', sans-serif" stroke="#1a1a1a" stroke-width="0.85" stroke-linejoin="round" fill="#1a1a1a" text-anchor="start" textLength="101.7" lengthAdjust="spacingAndGlyphs">Constantine</text><circle cx="1839.9" cy="830" r="2.3" fill="#f3efe6" stroke="#4f4f4f" stroke-width="1.2"/><text x="1363" y="890.6" font-size="16.9" font-family="'DejaVu Sans', sans-serif" stroke="#1a1a1a" stroke-width="0.85" stroke-linejoin="round" fill="#1a1a1a" text-anchor="start" textLength="41.4" lengthAdjust="spacingAndGlyphs">Oran</text><circle cx="1355.7" cy="884.3" r="2.3" fill="#f3efe6" stroke="#4f4f4f" stroke-width="1.2"/></g>
<ellipse cx="1175.8" cy="693" rx="17" ry="6.5" fill="#000" opacity="0.27" filter="url(#sh)" transform="rotate(-28 1166.8 696)"/><path d="M1166.8,696 C1162.8,687 1149.2,681.6 1149.2,667.6 A17.6,17.6 0 1 1 1184.3999999999999,667.6 C1184.3999999999999,681.6 1170.8,687 1166.8,696Z" fill="#6ab023" stroke="#5d9c1d" stroke-width="1.2"/><circle cx="1166.8" cy="667.3000000000001" r="11.6" fill="#1e3d06"/><ellipse cx="1334.2" cy="690.4" rx="17" ry="6.5" fill="#000" opacity="0.27" filter="url(#sh)" transform="rotate(-28 1325.2 693.4)"/><path d="M1325.2,693.4 C1321.2,684.4 1307.6000000000001,679.0 1307.6000000000001,665.0 A17.6,17.6 0 1 1 1342.8,665.0 C1342.8,679.0 1329.2,684.4 1325.2,693.4Z" fill="#b01a20" stroke="#9a151b" stroke-width="1.2"/><circle cx="1325.2" cy="664.7" r="11.6" fill="#470b0c"/>
<circle cx="843.9" cy="224.8" r="29.3" fill="rgba(241,211,87,0.45)"/><circle cx="843.9" cy="224.8" r="21.8" fill="rgba(240,194,12,0.8)"/><text x="843.9" y="231.10000000000002" text-anchor="middle" font-size="18" fill="#000" fill-opacity="0.66">19</text><circle cx="1022" cy="209.2" r="29.3" fill="rgba(181,226,140,0.52)"/><circle cx="1022" cy="209.2" r="21.8" fill="rgba(110,204,57,0.76)"/><text x="1022" y="215.5" text-anchor="middle" font-size="18" fill="#000" fill-opacity="0.66">8</text><circle cx="1224.3" cy="251.2" r="29.3" fill="rgba(181,226,140,0.52)"/><circle cx="1224.3" cy="251.2" r="21.8" fill="rgba(110,204,57,0.76)"/><text x="1224.3" y="257.5" text-anchor="middle" font-size="18" fill="#000" fill-opacity="0.66">4</text><circle cx="1333.9" cy="360.4" r="29.3" fill="rgba(241,211,87,0.45)"/><circle cx="1333.9" cy="360.4" r="21.8" fill="rgba(240,194,12,0.8)"/><text x="1333.9" y="366.7" text-anchor="middle" font-size="18" fill="#000" fill-opacity="0.66">36</text><circle cx="1513.1" cy="391.2" r="29.3" fill="rgba(241,211,87,0.45)"/><circle cx="1513.1" cy="391.2" r="21.8" fill="rgba(240,194,12,0.8)"/><text x="1513.1" y="397.5" text-anchor="middle" font-size="18" fill="#000" fill-opacity="0.66">57</text><circle cx="1054.2" cy="407.3" r="29.3" fill="rgba(181,226,140,0.52)"/><circle cx="1054.2" cy="407.3" r="21.8" fill="rgba(110,204,57,0.76)"/><text x="1054.2" y="413.6" text-anchor="middle" font-size="18" fill="#000" fill-opacity="0.66">2</text><circle cx="1152.4" cy="484.2" r="29.3" fill="rgba(241,211,87,0.45)"/><circle cx="1152.4" cy="484.2" r="21.8" fill="rgba(240,194,12,0.8)"/><text x="1152.4" y="490.5" text-anchor="middle" font-size="18" fill="#000" fill-opacity="0.66">52</text><circle cx="1370.7" cy="568.8" r="29.3" fill="rgba(241,211,87,0.45)"/><circle cx="1370.7" cy="568.8" r="21.8" fill="rgba(240,194,12,0.8)"/><text x="1370.7" y="575.0999999999999" text-anchor="middle" font-size="18" fill="#000" fill-opacity="0.66">14</text><circle cx="1576.8" cy="558.9" r="29.3" fill="rgba(181,226,140,0.52)"/><circle cx="1576.8" cy="558.9" r="21.8" fill="rgba(110,204,57,0.76)"/><text x="1576.8" y="565.1999999999999" text-anchor="middle" font-size="18" fill="#000" fill-opacity="0.66">2</text><circle cx="996.8" cy="759.8" r="29.3" fill="rgba(181,226,140,0.52)"/><circle cx="996.8" cy="759.8" r="21.8" fill="rgba(110,204,57,0.76)"/><text x="996.8" y="766.0999999999999" text-anchor="middle" font-size="18" fill="#000" fill-opacity="0.66">5</text><circle cx="1103.7" cy="785.8" r="29.3" fill="rgba(181,226,140,0.52)"/><circle cx="1103.7" cy="785.8" r="21.8" fill="rgba(110,204,57,0.76)"/><text x="1103.7" y="792.0999999999999" text-anchor="middle" font-size="18" fill="#000" fill-opacity="0.66">4</text>
<rect x="421" y="99" width="9" height="825" fill="url(#edge)"/>
<rect x="421" y="99.5" width="1579" height="12" fill="url(#topsh)"/>
</svg>

<div id="topbar" class="abs"></div>
<div id="search" class="abs"></div>
<svg class="ic" style="left:592px;top:42px" width="22" height="22" viewBox="0 0 22 22"><circle cx="9.8" cy="9.4" r="6.3" fill="none" stroke="#fff" stroke-width="3"/><path d="M14.7,14.3 L18.3,17.6" stroke="#fff" stroke-width="3.8" stroke-linecap="round"/></svg>
<span class="t" style="left:629.0px;top:40.1px;font-size:20px;font-weight:normal;color:#bfc3c8;transform:scaleX(0.9478);">Buscar</span>
<div id="filter" class="abs"></div>
<div class="abs" style="left:967.4px;top:36px;width:30px;height:30px;border-radius:50%;background:#ffc334"></div>
<span class="t" style="left:977.7px;top:42.7px;font-size:17px;font-weight:bold;color:#5b4a10;transform:scaleX(1.0139);">0</span><span class="t" style="left:1014.2px;top:41.6px;font-size:20px;font-weight:bold;color:#fff;transform:scaleX(0.9507);">CLASIFICAR Y FILTRAR</span>
<svg class="ic" style="left:1249.6px;top:43.5px" width="17.5" height="11.5" viewBox="0 0 17.5 11.5"><path d="M2.6,2.6 L8.75,8.9 L14.9,2.6" fill="none" stroke="#fff" stroke-width="4.2" stroke-linejoin="miter"/></svg>
<div id="share" class="abs"></div>
<svg class="ic" style="left:1775px;top:40px" width="20" height="17" viewBox="0 0 20 17"><path d="M11.2,0.6 L19.2,6.9 L11.2,13.2 L11.2,9.4 C6.5,9.2 3.2,11 0.8,15.8 C1,9 4.8,4.6 11.2,4.3 Z" fill="#fff"/></svg>
<span class="t" style="left:1808.0px;top:41.7px;font-size:19.5px;font-weight:bold;color:#fff;letter-spacing:1.920px;">COMPARTIR</span>
<div id="fab" class="abs"></div>
<svg class="ic" style="left:484px;top:87px" width="25" height="25" viewBox="0 0 25 25"><path d="M12.1,0.8 V23.8 M0.5,12.3 H23.7" stroke="#2e3842" stroke-width="5.6"/></svg>
<div id="rail" class="abs"></div>
<svg class="ic" style="left:37.4px;top:30px" width="19" height="25" viewBox="0 0 19 25"><path d="M9.5,24 C7.4,19.4 0.3,15 0.3,9.7 A9.2,9.2 0 0 1 18.7,9.7 C18.7,15 11.6,19.4 9.5,24Z M9.5,3.9 A5.8,5.8 0 1 0 9.5,15.5 A5.8,5.8 0 1 0 9.5,3.9Z" fill="#ffc334" fill-rule="evenodd"/></svg>
<span class="t" style="left:30.0px;top:63.6px;font-size:17px;font-weight:normal;color:#ffc334;transform:scaleX(1.0158);">Map</span>
<svg class="ic" style="left:34.5px;top:132.8px" width="25" height="21" viewBox="0 0 25 21"><g fill="#c5c8cd"><rect x="0" y="0" width="9.2" height="9.2"/><rect x="0" y="11.5" width="9.2" height="9.2"/><rect x="12" y="0.3" width="12.8" height="2.7"/><rect x="12" y="5.7" width="8.6" height="2.7"/><rect x="12" y="11.8" width="12.8" height="2.7"/><rect x="12" y="17.2" width="8.6" height="2.7"/></g></svg>
<span class="t" style="left:24.7px;top:165.6px;font-size:17px;font-weight:normal;color:#c5c8cd;transform:scaleX(0.9973);">Datos</span>
<svg class="ic" style="left:35px;top:236.5px" width="24" height="20" viewBox="0 0 24 20"><path d="M0.5,11 H6.3 L8.6,6.4 L11.4,18.2 L14.3,1.4 L16.8,14 L18.3,11 H23.5" fill="none" stroke="#c5c8cd" stroke-width="2.4" stroke-linejoin="miter"/></svg>
<span class="t" style="left:11.3px;top:268.0px;font-size:17px;font-weight:normal;color:#c5c8cd;transform:scaleX(1.0292);">Actividad</span>
<svg class="ic" style="left:34.4px;top:648px" width="25" height="25" viewBox="0 0 25 25"><g fill="#c5c8cd"><rect x="0.0" y="0.0" width="6.6" height="6.6"/><rect x="9.1" y="0.0" width="6.6" height="6.6"/><rect x="18.2" y="0.0" width="6.6" height="6.6"/><rect x="0.0" y="9.1" width="6.6" height="6.6"/><rect x="9.1" y="9.1" width="6.6" height="6.6"/><rect x="18.2" y="9.1" width="6.6" height="6.6"/><rect x="0.0" y="18.2" width="6.6" height="6.6"/><rect x="9.1" y="18.2" width="6.6" height="6.6"/><rect x="18.2" y="18.2" width="6.6" height="6.6"/></g></svg>
<svg class="ic" style="left:34.4px;top:709.6px" width="25" height="22" viewBox="0 0 25 22"><path d="M10.5,1.2 H23.6 V20.4 H10.5" fill="none" stroke="#c5c8cd" stroke-width="2.4"/><path d="M0.4,10.8 H13.6" stroke="#c5c8cd" stroke-width="2.4"/><path d="M11.2,5.4 L17.8,10.8 L11.2,16.2Z" fill="#c5c8cd"/></svg>
<span class="t" style="left:16.0px;top:743.0px;font-size:17px;font-weight:normal;color:#c5c8cd;transform:scaleX(0.9940);">Acceder</span>
<svg class="ic" style="left:35px;top:789px" width="24" height="24" viewBox="0 0 24 24"><g fill="#c5c8cd"><ellipse cx="12" cy="7.2" rx="6.2" ry="7"/><path d="M0.2,23.8 C0.2,17 4,15 8.5,14.4 C10.6,16.2 13.4,16.2 15.5,14.4 C20,15 23.8,17 23.8,23.8Z"/></g></svg>
<span class="t" style="left:16.0px;top:821.9px;font-size:17px;font-weight:normal;color:#c5c8cd;transform:scaleX(0.9793);">Registro</span>
<svg class="ic" style="left:0;top:0" width="94" height="924" viewBox="0 0 94 924"><g fill="#c5c8cd"><path d="M47,870.4 C52,869.6 57.5,871.6 60.2,875 C62.2,877.8 60.8,882 61,885.6 C61.2,890 59.6,894.4 56.6,897.6 C54,900.4 51,902.8 47.6,902.8 C44.4,902.8 41.6,900.6 39.4,898.2 C36.6,895.2 35.6,891.6 33.4,888.6 C31.4,886 29,884.6 29.8,882 C30.6,879.4 33.6,878.4 35.8,876.2 C38.6,873.4 42.6,871 47,870.4Z"/><circle cx="32.4" cy="876" r="1.5"/><circle cx="61.5" cy="895.4" r="2.8"/></g><circle cx="47" cy="884.4" r="10.2" fill="#c9ccd1" stroke="#4d535c" stroke-width="1.3"/><g fill="none" stroke="#7b8089" stroke-width="1.1"><ellipse cx="47" cy="884.4" rx="4.6" ry="9.6"/><path d="M37.4,884.4 H56.6 M38.8,879.6 H55.2 M38.8,889.2 H55.2 M47,874.8 V894"/></g></svg>
<div id="side" class="abs"></div>
<span class="t" style="left:130.0px;top:30.0px;font-size:39px;font-weight:bold;color:#fff;-webkit-text-stroke:0.5px #fff;transform:scaleX(0.8846);">FrenaLaCurva</span>
<svg class="ic" style="left:175.5px;top:99.2px" width="147" height="147" viewBox="0 0 147 147" font-family="'Liberation Sans', sans-serif">
<defs><clipPath id="lc"><circle cx="73.5" cy="73.5" r="73.5"/></clipPath></defs>
<circle cx="73.5" cy="73.5" r="73.5" fill="#fff"/>
<g clip-path="url(#lc)">
<path d="M60,49.2 L66.5,37 H150 V62 H66.5Z" fill="#f46a6d"/>
<path d="M10,118 C18,100 20,21.5 39.5,21.5 C58,21.5 54,72 66,95.5 C76,115 96,120.5 120,120.5" fill="none" stroke="#f26468" stroke-width="3.4"/>
<path d="M14,121 C50,121 62,104 74,85 C83,70.5 88,67.2 95,67.2 C103,67.2 110,76 117,92 C123,106 128,116 137,119" fill="none" stroke="#4b57ee" stroke-width="3.4"/>
<rect x="14" y="121.6" width="120" height="3.4" fill="#111"/>
<text x="72.8" y="34.4" font-size="9.4" fill="#222" textLength="55" lengthAdjust="spacingAndGlyphs">frenalacurva</text>
<text x="73.4" y="57.4" font-size="26" fill="#1a0606" textLength="59" lengthAdjust="spacingAndGlyphs">maps</text>
</g></svg>
<span class="t" style="left:129.0px;top:271.9px;font-size:19px;font-weight:normal;color:#e8e9ea;transform:scaleX(1.0420);">IMPORTANTE Cumple las</span><span class="t" style="left:129.0px;top:299.9px;font-size:19px;font-weight:normal;color:#e8e9ea;transform:scaleX(1.0441);">restricciones de las</span><span class="t" style="left:129.0px;top:327.9px;font-size:19px;font-weight:normal;color:#e8e9ea;transform:scaleX(1.0311);">autoridades. ES TU</span><span class="t" style="left:129.0px;top:355.7px;font-size:19px;font-weight:normal;color:#e8e9ea;transform:scaleX(1.0228);">RESPONSABILIDAD</span>
<div class="abs card" style="top:416px;height:90px"><i style="background:#b01c26"></i></div>
<span class="t" style="left:129.0px;top:435.8px;font-size:22px;font-weight:normal;color:#f2f2f3;transform:scaleX(1.0197);">Necesidad</span><span class="t" style="left:129.0px;top:464.8px;font-size:22px;font-weight:normal;color:#f2f2f3;transform:scaleX(1.0512);">propia</span><div class="abs badge" style="left:301px;top:446.5px;width:68px"></div><svg class="ic" style="left:340.5px;top:456.3px" width="14.4" height="9.8" viewBox="0 0 14.4 9.8"><path d="M2.5,2.5 L7.2,7.300000000000001 L11.9,2.5" fill="none" stroke="#22262c" stroke-width="4" stroke-linejoin="miter"/></svg><span class="t" style="left:313.0px;top:454.0px;font-size:16px;font-weight:normal;color:#fff;text-shadow:0 1px 1px rgba(0,0,0,.45);transform:scaleX(1.0837);">11</span>
<div class="abs card" style="top:513.8px;height:92.2px"><i style="background:#f0a22e"></i></div>
<span class="t" style="left:129.0px;top:534.6px;font-size:22px;font-weight:normal;color:#f2f2f3;transform:scaleX(1.0306);">Necesidad con</span><span class="t" style="left:129.0px;top:563.2px;font-size:22px;font-weight:normal;color:#f2f2f3;transform:scaleX(1.0652);">intermediación</span><div class="abs badge" style="left:311.4px;top:544.6px;width:57.60000000000002px"></div><svg class="ic" style="left:340.5px;top:554.4px" width="14.4" height="9.8" viewBox="0 0 14.4 9.8"><path d="M2.5,2.5 L7.2,7.300000000000001 L11.9,2.5" fill="none" stroke="#22262c" stroke-width="4" stroke-linejoin="miter"/></svg><span class="t" style="left:325.0px;top:552.0px;font-size:16px;font-weight:normal;color:#fff;text-shadow:0 1px 1px rgba(0,0,0,.45);transform:scaleX(1.0667);">2</span>
<div class="abs card" style="top:613.3px;height:63px"><i style="background:#6bb120"></i></div>
<span class="t" style="left:129.0px;top:632.9px;font-size:22px;font-weight:normal;color:#f2f2f3;transform:scaleX(1.0848);">Ofrecimiento</span><div class="abs badge" style="left:290.8px;top:629.6px;width:78.59999999999997px"></div><svg class="ic" style="left:340.9px;top:639.4px" width="14.4" height="9.8" viewBox="0 0 14.4 9.8"><path d="M2.5,2.5 L7.2,7.300000000000001 L11.9,2.5" fill="none" stroke="#22262c" stroke-width="4" stroke-linejoin="miter"/></svg><span class="t" style="left:303.5px;top:636.8px;font-size:16px;font-weight:normal;color:#fff;text-shadow:0 1px 1px rgba(0,0,0,.45);transform:scaleX(1.0898);">166</span>
<div class="abs card" style="top:683.4px;height:91px"><i style="background:#2c80c6"></i></div>
<span class="t" style="left:129.0px;top:703.4px;font-size:22px;font-weight:normal;color:#f2f2f3;transform:scaleX(1.0488);">Servicio público</span><span class="t" style="left:129.0px;top:731.9px;font-size:22px;font-weight:normal;color:#f2f2f3;transform:scaleX(1.0542);">disponible</span><div class="abs badge" style="left:301.4px;top:714.4px;width:68.0px"></div><svg class="ic" style="left:340.9px;top:724.1999999999999px" width="14.4" height="9.8" viewBox="0 0 14.4 9.8"><path d="M2.5,2.5 L7.2,7.300000000000001 L11.9,2.5" fill="none" stroke="#22262c" stroke-width="4" stroke-linejoin="miter"/></svg><span class="t" style="left:313.5px;top:721.5px;font-size:16px;font-weight:normal;color:#fff;text-shadow:0 1px 1px rgba(0,0,0,.45);transform:scaleX(1.1238);">30</span>
<span class="t" style="left:129.0px;top:835.5px;font-size:14.5px;font-weight:bold;color:#d2d4d7;letter-spacing:1.147px;">FUENTES DE DATOS</span>
<div class="abs card" style="top:863.6px;height:61px"><i style="background:#1cabec"></i></div>
<span class="t" style="left:129.0px;top:885.6px;font-size:22px;font-weight:normal;color:#f2f2f3;transform:scaleX(1.0630);">Web</span><div class="abs badge" style="left:290.8px;top:881.3px;width:78.59999999999997px"></div><svg class="ic" style="left:340.9px;top:891.0999999999999px" width="14.4" height="9.8" viewBox="0 0 14.4 9.8"><path d="M2.5,2.5 L7.2,7.300000000000001 L11.9,2.5" fill="none" stroke="#22262c" stroke-width="4" stroke-linejoin="miter"/></svg><span class="t" style="left:303.5px;top:888.5px;font-size:16px;font-weight:normal;color:#fff;text-shadow:0 1px 1px rgba(0,0,0,.45);transform:scaleX(1.1047);">209</span>
<div id="track" class="abs"></div><div id="thumb" class="abs"></div>
<div id="zoom" class="abs"><b></b></div><span class="t" style="left:451.3px;top:825.4px;font-size:34px;font-weight:normal;color:#222;">+</span><span class="t" style="left:455.4px;top:865.3px;font-size:40px;font-weight:bold;color:#222;">-</span>
<div id="attr" class="abs"></div><span class="t" style="left:1569.6px;top:907.1px;font-size:16px;font-weight:normal;color:#444;transform:scaleX(1.0047);">© OpenStreetMap, © Mapbox | Improve the underlying map</span>
<div id="topline" class="abs"></div>

</div>
</body></html>
